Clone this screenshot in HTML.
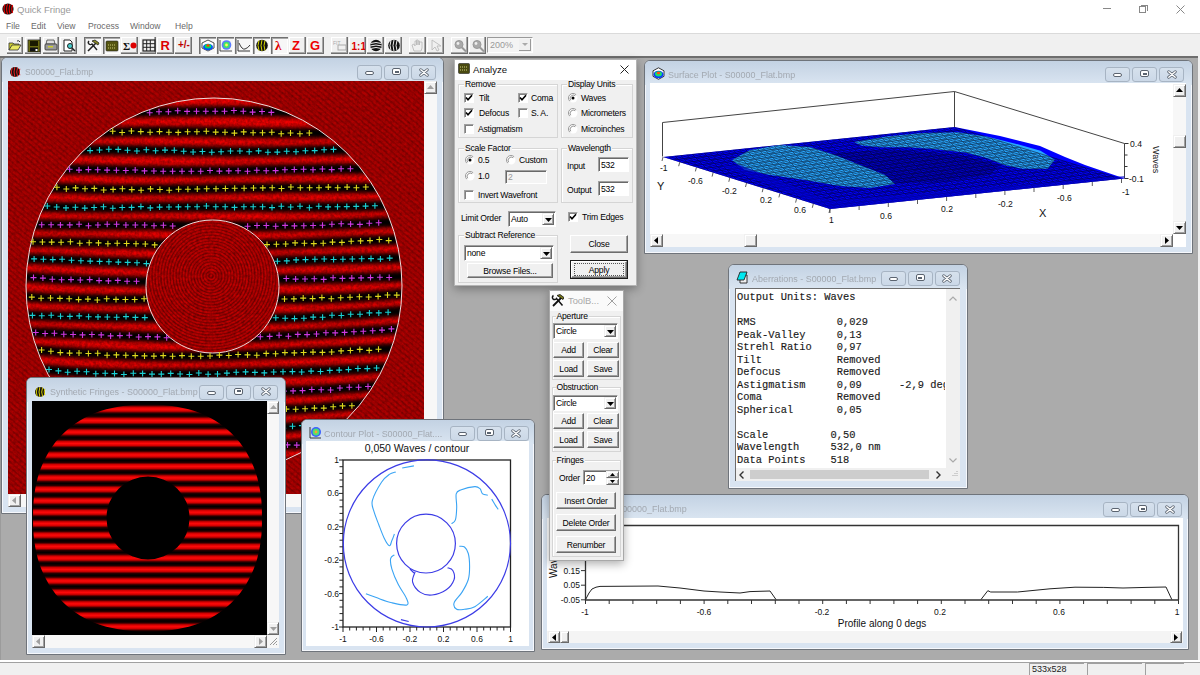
<!DOCTYPE html><html><head><meta charset="utf-8"><style>
*{box-sizing:border-box}
body{margin:0;width:1200px;height:675px;overflow:hidden;position:relative;background:#fff;font-family:'Liberation Sans',sans-serif;}
.a{position:absolute}
.t{position:absolute;white-space:nowrap;line-height:1}
.win{position:absolute;border:1px solid #6f747b;border-radius:6px 6px 0 0;background:#d9e4f1;overflow:hidden;box-shadow:inset 0 0 0 1px rgba(255,255,255,0.75)}
.tb{position:absolute;left:0;right:0;top:0;height:24px;background:linear-gradient(#c3d2e3,#dae5f1)}
.wt{position:absolute;top:9px;font-size:9.6px;color:#a3a9b1;white-space:nowrap;line-height:1;transform:scaleX(0.932);transform-origin:0 0}
.wb{position:absolute;top:7px;width:25px;height:15px;border:1px solid #a7b4c3;border-radius:3px;background:linear-gradient(#d6e1ed,#cbd8e7)}
.cl{position:absolute;background:#fff}
.btn{position:absolute;letter-spacing:-0.2px;background:#f0f0f0;border:1px solid;border-color:#fff #6d6d6d #6d6d6d #fff;box-shadow:inset -1px -1px #a0a0a0;font-size:9px;color:#000;text-align:center;line-height:1}
.tbtn{position:absolute;top:37px;height:17px;border:1px solid;border-color:#fff #888 #888 #fff;}
.tbtn.dn{border-color:#888 #fff #fff #888;background:#f7f7f7}
.grp{position:absolute;border:1px solid #d5d5d5;box-shadow:1px 1px #fff inset}
.gl{position:absolute;background:#f0f0f0;font-size:8.6px;letter-spacing:-0.22px;padding:0 1px;line-height:1;top:-5px;left:5px;color:#000}
.chk{position:absolute;width:10px;height:10px;border:1px solid;border-color:#a0a0a0 #fff #fff #a0a0a0;background:#fff;box-shadow:inset 1px 1px #808080}
.rad{position:absolute;width:10px;height:10px;border-radius:50%;background:#fff;border:1px solid #a0a0a0}
.lab{position:absolute;font-size:9px;color:#000;white-space:nowrap;line-height:1}
.edit{position:absolute;background:#fff;border:1px solid;border-color:#a0a0a0 #fff #fff #a0a0a0;box-shadow:inset 1px 1px #696969;font-size:9px;line-height:1}
.sb{position:absolute;background:#f5f5f5}
.sbb{position:absolute;background:#f0f0f0;border:1px solid;border-color:#f0f0f0 #696969 #696969 #f0f0f0;box-shadow:inset 1px 1px #fff, inset -1px -1px #a0a0a0}
</style></head><body>

<svg class="a" style="left:2px;top:3px" width="12" height="12" viewBox="0 0 12 12"><circle cx="6" cy="6" r="5.6" fill="#111"/><path d="M3 1.5 Q1 6 3 10.5 M5.6 1 Q3.6 6 5.6 11 M8.2 1 Q6.2 6 8.2 11 M10.6 2 Q8.8 6 10.6 10" stroke="#e00" stroke-width="1.1" fill="none"/></svg>
<div class="t" style="left:17px;top:5px;font-size:9.5px;color:#9a9a9a">Quick Fringe</div>
<div class="a" style="left:1103px;top:8px;width:8px;height:1px;background:#888"></div>
<div class="a" style="left:1139px;top:6px;width:7px;height:7px;border:1px solid #888"></div><div class="a" style="left:1141px;top:4.5px;width:6.5px;height:6.5px;border-top:1px solid #888;border-right:1px solid #888"></div>
<svg class="a" style="left:1176px;top:5px" width="9" height="9"><path d="M0.5 0.5L8.5 8.5M8.5 0.5L0.5 8.5" stroke="#888" stroke-width="1"/></svg>
<div class="t" style="left:6px;top:22px;font-size:8.6px;color:#6a6a6a">File</div>
<div class="t" style="left:31px;top:22px;font-size:8.6px;color:#6a6a6a">Edit</div>
<div class="t" style="left:57px;top:22px;font-size:8.6px;color:#6a6a6a">View</div>
<div class="t" style="left:88px;top:22px;font-size:8.6px;color:#6a6a6a">Process</div>
<div class="t" style="left:130px;top:22px;font-size:8.6px;color:#6a6a6a">Window</div>
<div class="t" style="left:175px;top:22px;font-size:8.6px;color:#6a6a6a">Help</div>
<div class="a" style="left:0;top:33px;width:1200px;height:1px;background:#dadada"></div>
<div class="a" style="left:0;top:34px;width:1200px;height:22px;background:#f0f0f0"></div>
<div class="a" style="left:0;top:56px;width:1200px;height:2px;background:#6e6e6e"></div>
<div class="a" style="left:7px;top:37px;width:16px;height:17px;border-right:1px solid #707070;border-bottom:1px solid #707070;box-shadow:inset -1px -1px #a8a8a8, inset 1px 1px #fff"></div>
<div class="a" style="left:25px;top:37px;width:16px;height:17px;border-right:1px solid #707070;border-bottom:1px solid #707070;box-shadow:inset -1px -1px #a8a8a8, inset 1px 1px #fff"></div>
<div class="a" style="left:43px;top:37px;width:16px;height:17px;border-right:1px solid #707070;border-bottom:1px solid #707070;box-shadow:inset -1px -1px #a8a8a8, inset 1px 1px #fff"></div>
<div class="a" style="left:60px;top:37px;width:17px;height:17px;border-right:1px solid #707070;border-bottom:1px solid #707070;box-shadow:inset -1px -1px #a8a8a8, inset 1px 1px #fff"></div>
<div class="a" style="left:84px;top:37px;width:17px;height:17px;border-left:1px solid #707070;border-top:1px solid #707070;box-shadow:inset 1px 1px #a8a8a8, inset -1px -1px #fff;background:#f7f7f7"></div>
<div class="a" style="left:103px;top:37px;width:17px;height:17px;border-left:1px solid #707070;border-top:1px solid #707070;box-shadow:inset 1px 1px #a8a8a8, inset -1px -1px #fff;background:#f7f7f7"></div>
<div class="a" style="left:121px;top:37px;width:17px;height:17px;border-right:1px solid #707070;border-bottom:1px solid #707070;box-shadow:inset -1px -1px #a8a8a8, inset 1px 1px #fff"></div>
<div class="a" style="left:140px;top:37px;width:16px;height:17px;border-right:1px solid #707070;border-bottom:1px solid #707070;box-shadow:inset -1px -1px #a8a8a8, inset 1px 1px #fff"></div>
<div class="a" style="left:157px;top:37px;width:17px;height:17px;border-right:1px solid #707070;border-bottom:1px solid #707070;box-shadow:inset -1px -1px #a8a8a8, inset 1px 1px #fff"></div>
<div class="a" style="left:175px;top:37px;width:17px;height:17px;border-right:1px solid #707070;border-bottom:1px solid #707070;box-shadow:inset -1px -1px #a8a8a8, inset 1px 1px #fff"></div>
<div class="a" style="left:199px;top:37px;width:17px;height:17px;border-left:1px solid #707070;border-top:1px solid #707070;box-shadow:inset 1px 1px #a8a8a8, inset -1px -1px #fff;background:#f7f7f7"></div>
<div class="a" style="left:217px;top:37px;width:17px;height:17px;border-left:1px solid #707070;border-top:1px solid #707070;box-shadow:inset 1px 1px #a8a8a8, inset -1px -1px #fff;background:#f7f7f7"></div>
<div class="a" style="left:235px;top:37px;width:17px;height:17px;border-left:1px solid #707070;border-top:1px solid #707070;box-shadow:inset 1px 1px #a8a8a8, inset -1px -1px #fff;background:#f7f7f7"></div>
<div class="a" style="left:253px;top:37px;width:17px;height:17px;border-left:1px solid #707070;border-top:1px solid #707070;box-shadow:inset 1px 1px #a8a8a8, inset -1px -1px #fff;background:#f7f7f7"></div>
<div class="a" style="left:271px;top:37px;width:17px;height:17px;border-left:1px solid #707070;border-top:1px solid #707070;box-shadow:inset 1px 1px #a8a8a8, inset -1px -1px #fff;background:#f7f7f7"></div>
<div class="a" style="left:289px;top:37px;width:17px;height:17px;border-right:1px solid #707070;border-bottom:1px solid #707070;box-shadow:inset -1px -1px #a8a8a8, inset 1px 1px #fff"></div>
<div class="a" style="left:307px;top:37px;width:17px;height:17px;border-right:1px solid #707070;border-bottom:1px solid #707070;box-shadow:inset -1px -1px #a8a8a8, inset 1px 1px #fff"></div>
<div class="a" style="left:331px;top:37px;width:17px;height:17px;border-right:1px solid #707070;border-bottom:1px solid #707070;box-shadow:inset -1px -1px #a8a8a8, inset 1px 1px #fff"></div>
<div class="a" style="left:349px;top:37px;width:17px;height:17px;border-right:1px solid #707070;border-bottom:1px solid #707070;box-shadow:inset -1px -1px #a8a8a8, inset 1px 1px #fff"></div>
<div class="a" style="left:367px;top:37px;width:17px;height:17px;border-right:1px solid #707070;border-bottom:1px solid #707070;box-shadow:inset -1px -1px #a8a8a8, inset 1px 1px #fff"></div>
<div class="a" style="left:385px;top:37px;width:17px;height:17px;border-right:1px solid #707070;border-bottom:1px solid #707070;box-shadow:inset -1px -1px #a8a8a8, inset 1px 1px #fff"></div>
<div class="a" style="left:409px;top:37px;width:17px;height:17px;border-right:1px solid #707070;border-bottom:1px solid #707070;box-shadow:inset -1px -1px #a8a8a8, inset 1px 1px #fff"></div>
<div class="a" style="left:427px;top:37px;width:17px;height:17px;border-right:1px solid #707070;border-bottom:1px solid #707070;box-shadow:inset -1px -1px #a8a8a8, inset 1px 1px #fff"></div>
<div class="a" style="left:451px;top:37px;width:17px;height:17px;border-right:1px solid #707070;border-bottom:1px solid #707070;box-shadow:inset -1px -1px #a8a8a8, inset 1px 1px #fff"></div>
<div class="a" style="left:469px;top:37px;width:17px;height:17px;border-right:1px solid #707070;border-bottom:1px solid #707070;box-shadow:inset -1px -1px #a8a8a8, inset 1px 1px #fff"></div>
<svg class="a" style="left:8px;top:39px" width="14" height="13" viewBox="0 0 14 13"><path d="M1 4h4l1 1h5v2H4L1 11z" fill="#cccc33" stroke="#333" stroke-width="0.8"/><path d="M1 11l3-5h9l-3 5z" fill="#e8e860" stroke="#333" stroke-width="0.8"/><path d="M9 2q2-1 3 1" stroke="#333" fill="none"/></svg>
<svg class="a" style="left:27px;top:39px" width="14" height="13" viewBox="0 0 14 13"><rect x="1" y="1" width="12" height="12" fill="#6b6b10" stroke="#222" stroke-width="0.8"/><rect x="3" y="2" width="8" height="5" fill="#1a1a00"/><rect x="3" y="8.5" width="8" height="4" fill="#111"/><rect x="8.5" y="10" width="2" height="2" fill="#fff"/></svg>
<svg class="a" style="left:44px;top:39px" width="14" height="13" viewBox="0 0 14 13"><path d="M3 1h7l1 4H2z" fill="#ddd" stroke="#444" stroke-width="0.8"/><rect x="1" y="5" width="12" height="6" rx="1" fill="#999" stroke="#333" stroke-width="0.8"/><rect x="4" y="7" width="5" height="1.5" fill="#cc3"/></svg>
<svg class="a" style="left:62px;top:39px" width="14" height="13" viewBox="0 0 14 13"><path d="M2 1h6l2 2v9H2z" fill="#fff" stroke="#222" stroke-width="1"/><circle cx="8" cy="7" r="2.5" fill="#4cc" stroke="#222" stroke-width="1"/><path d="M10 9l3 3" stroke="#222" stroke-width="1.5"/></svg>
<svg class="a" style="left:86px;top:39px" width="14" height="13" viewBox="0 0 14 13"><path d="M2 12L11 3" stroke="#222" stroke-width="1.6"/><path d="M6 2l6 4 1-2-4-3z" fill="#888822" stroke="#222" stroke-width="0.8"/><path d="M3 2a2 2 0 1 0 3 3L11 11" stroke="#222" stroke-width="1.4" fill="none"/></svg>
<svg class="a" style="left:105px;top:40px" width="14" height="13" viewBox="0 0 14 13"><rect x="1" y="1" width="12" height="10" rx="1" fill="#555511" stroke="#222" stroke-width="0.6"/><path d="M3 5h8M3 8h8" stroke="#cccc77" stroke-width="1" stroke-dasharray="1 1"/></svg>
<svg class="a" style="left:123px;top:39px" width="14" height="13" viewBox="0 0 14 13"><text x="0" y="11" font-size="11" font-family="Liberation Serif" font-weight="bold" fill="#111">Σ</text><circle cx="10.5" cy="6.5" r="3" fill="#d00"/></svg>
<svg class="a" style="left:142px;top:39px" width="14" height="13" viewBox="0 0 14 13"><rect x="1" y="1" width="12" height="11" fill="none" stroke="#222" stroke-width="1.2"/><path d="M4.7 1v11M8.3 1v11M1 4.7h12M1 8.3h12" stroke="#222" stroke-width="1"/></svg>
<svg class="a" style="left:159px;top:38px" width="14" height="13" viewBox="0 0 14 13"><text x="1.5" y="12" font-size="13" font-family="Liberation Sans" font-weight="bold" fill="#d00">R</text></svg>
<svg class="a" style="left:177px;top:38px" width="14" height="13" viewBox="0 0 14 13"><text x="1" y="10" font-size="10" font-family="Liberation Sans" font-weight="bold" fill="#b00">+/-</text></svg>
<svg class="a" style="left:201px;top:39px" width="14" height="13" viewBox="0 0 14 13"><path d="M7 1l6 3v5l-6 3-6-3V4z" fill="#fff" stroke="#222" stroke-width="0.8"/><ellipse cx="7" cy="8" rx="5" ry="3.3" fill="#0050ff"/><ellipse cx="7" cy="7.3" rx="3.3" ry="2.2" fill="#00e060"/><ellipse cx="7" cy="6.5" rx="1.6" ry="1.2" fill="#f40"/></svg>
<svg class="a" style="left:219px;top:39px" width="14" height="13" viewBox="0 0 14 13"><path d="M1 1v11h12" stroke="#222" fill="none" stroke-width="0.8"/><circle cx="7.5" cy="6" r="4.8" fill="#5a7cff"/><circle cx="7.5" cy="6" r="3.2" fill="#40e070"/><circle cx="7.5" cy="6" r="1.4" fill="#ff5"/></svg>
<svg class="a" style="left:237px;top:39px" width="14" height="13" viewBox="0 0 14 13"><path d="M1 1v11h12" stroke="#222" fill="none" stroke-width="0.9"/><path d="M2 4q3 7 6 6t5-4" stroke="#222" fill="none" stroke-width="0.9"/></svg>
<svg class="a" style="left:255px;top:39px" width="14" height="13" viewBox="0 0 14 13"><circle cx="7" cy="6.5" r="5.8" fill="#111"/><path d="M4 1.5Q2 6.5 4 11.5M7 1Q5 6.5 7 12M10 1.5Q8 6.5 10 11.5" stroke="#d8d800" stroke-width="1" fill="none"/></svg>
<svg class="a" style="left:273px;top:38px" width="14" height="13" viewBox="0 0 14 13"><text x="2" y="12" font-size="13" font-family="Liberation Serif" font-weight="bold" fill="#d00">λ</text></svg>
<svg class="a" style="left:291px;top:38px" width="14" height="13" viewBox="0 0 14 13"><text x="1" y="12" font-size="13" font-family="Liberation Sans" font-weight="bold" fill="#e00">Z</text></svg>
<svg class="a" style="left:309px;top:38px" width="14" height="13" viewBox="0 0 14 13"><text x="1" y="12" font-size="13" font-family="Liberation Sans" font-weight="bold" fill="#e00">G</text></svg>
<svg class="a" style="left:333px;top:39px" width="14" height="13" viewBox="0 0 14 13"><text x="0" y="6" font-size="5" fill="#aaa" font-family="Liberation Sans">FIT</text><rect x="5" y="6" width="8" height="5" fill="none" stroke="#aaa"/></svg>
<svg class="a" style="left:351px;top:38px" width="14" height="13" viewBox="0 0 14 13"><text x="0.5" y="11.5" font-size="10" font-family="Liberation Sans" font-weight="bold" fill="#d00">1:1</text></svg>
<svg class="a" style="left:369px;top:39px" width="14" height="13" viewBox="0 0 14 13"><circle cx="7" cy="6.5" r="5.8" fill="#111"/><path d="M1.5 4.5Q7 2.5 12.5 4.5M1 7Q7 5 13 7M1.5 9.5Q7 7.5 12.5 9.5" stroke="#eee" stroke-width="1" fill="none"/></svg>
<svg class="a" style="left:387px;top:39px" width="14" height="13" viewBox="0 0 14 13"><circle cx="7" cy="6.5" r="5.8" fill="#111"/><path d="M4 1.5Q2 6.5 4 11.5M7 1Q5 6.5 7 12M10 1.5Q8 6.5 10 11.5" stroke="#eee" stroke-width="1" fill="none"/></svg>
<svg class="a" style="left:411px;top:39px" width="14" height="13" viewBox="0 0 14 13"><path d="M3 12L1 6l2-1 1 2V2h1.5v4V1h1.5v5V2h1.5v4V3H11v6l-1 3z" fill="none" stroke="#bbb" stroke-width="0.9"/></svg>
<svg class="a" style="left:430px;top:39px" width="14" height="13" viewBox="0 0 14 13"><path d="M2 1v10l3-3 2 4 2-1-2-4h4z" fill="none" stroke="#bbb" stroke-width="0.9"/></svg>
<svg class="a" style="left:453px;top:39px" width="14" height="13" viewBox="0 0 14 13"><circle cx="6" cy="5.5" r="4" fill="#aaa" stroke="#999"/><path d="M9 8.5l4 4" stroke="#999" stroke-width="2"/><circle cx="5" cy="4.5" r="1.4" fill="#eee"/></svg>
<svg class="a" style="left:471px;top:39px" width="14" height="13" viewBox="0 0 14 13"><circle cx="6" cy="5.5" r="4" fill="#aaa" stroke="#999"/><path d="M9 8.5l4 4" stroke="#999" stroke-width="2"/><circle cx="5" cy="4.5" r="1.4" fill="#eee"/></svg>
<div class="a" style="left:487px;top:37px;width:46px;height:16px;border:1px solid;border-color:#999 #fff #fff #999;background:#f4f4f4"></div>
<div class="t" style="left:490px;top:41px;font-size:9px;color:#999">200%</div>
<div class="a" style="left:519px;top:39px;width:12px;height:12px;background:#f0f0f0;border-right:1px solid #999;border-bottom:1px solid #999"></div>
<svg class="a" style="left:522px;top:43px" width="6" height="4"><path d="M0 0h6L3 3z" fill="#aaa"/></svg>
<div class="a" style="left:0;top:58px;width:1199px;height:602px;background:#ababab;border-left:1px solid #9b9b9b"></div>
<div class="a" style="left:1198px;top:56px;width:2px;height:604px;background:#f0f0f0"></div>
<div class="a" style="left:0;top:660px;width:1200px;height:2px;background:#fff"></div>
<div class="a" style="left:0;top:662px;width:1200px;height:1px;background:#a0a0a0"></div>
<div class="a" style="left:0;top:663px;width:1200px;height:12px;background:#f0f0f0"></div>
<div class="a" style="left:1029px;top:663px;width:55px;height:12px;border-left:1px solid #a0a0a0;border-top:1px solid #a0a0a0"></div>
<div class="a" style="left:1087px;top:663px;width:55px;height:12px;border-left:1px solid #a0a0a0;border-top:1px solid #a0a0a0"></div>
<div class="a" style="left:1145px;top:663px;width:39px;height:12px;border-left:1px solid #a0a0a0;border-top:1px solid #a0a0a0"></div>
<div class="t" style="left:1032px;top:665px;font-size:9px;color:#222">533x528</div>
<div class="win" style="left:1px;top:57px;width:443px;height:457px"><div class="tb"></div>
<div class="a" style="left:6.8px;top:6px"><svg width="12" height="12" viewBox="0 0 12 12"><circle cx="6" cy="6" r="5.5" fill="#fff" opacity="0.5"/><circle cx="6" cy="6" r="5" fill="#111"/><path d="M3.2 1.8Q1.4 6 3.2 10.2M5.9 1Q4.1 6 5.9 11M8.6 1.5Q6.8 6 8.6 10.5M10.8 2.8Q9.6 6 10.8 9.2" stroke="#ee2222" stroke-width="1" fill="none"/></svg></div>
<div class="wt" style="left:22.7px;top:9px;color:#a3a9b1;transform:scaleX(0.9)">S00000_Flat.bmp</div>
<div class="wb" style="left:409px;top:7px"></div>
<svg class="a" style="left:416.5px;top:9.5px" width="10" height="9"><path d="M1.8 1.8L8.2 7.2M8.2 1.8L1.8 7.2" stroke="#5b6470" stroke-width="3" stroke-linecap="round"/><path d="M1.8 1.8L8.2 7.2M8.2 1.8L1.8 7.2" stroke="#fff" stroke-width="1.4" stroke-linecap="round"/></svg>
<div class="wb" style="left:382px;top:7px"></div>
<div class="a" style="left:390px;top:10px;width:9px;height:7px;border:1.5px solid #5b6470;border-radius:2px;background:#fff"></div><div class="a" style="left:392.5px;top:12.5px;width:4px;height:2px;background:#5b6470"></div>
<div class="wb" style="left:355px;top:7px"></div>
<div class="a" style="left:363px;top:13px;width:9px;height:4px;border:1.2px solid #5b6470;border-radius:2px;background:#fff"></div>
</div>
<svg class="a" style="left:8px;top:81px" width="416" height="413" viewBox="0 0 416 413"><defs><filter id="bl" x="-10%" y="-10%" width="120%" height="120%"><feGaussianBlur stdDeviation="2.0"/></filter><filter id="nz"><feTurbulence type="fractalNoise" baseFrequency="0.35" numOctaves="2" seed="3"/><feColorMatrix values="0 0 0 0 0  0 0 0 0 0  0 0 0 0 0  0 0 0 0.9 -0.25"/></filter><clipPath id="ring"><path clip-rule="evenodd" d="M18 205a188 188 0 1 0 376 0a188 188 0 1 0 -376 0z M138.0 205.5a66.5 66.5 0 1 0 133.0 0a66.5 66.5 0 1 0 -133.0 0z"/></clipPath><clipPath id="inner"><circle cx="204.5" cy="205.5" r="66.5"/></clipPath></defs><rect width="416" height="413" fill="#b00000"/><defs><pattern id="diag" width="4.2" height="4.2" patternUnits="userSpaceOnUse" patternTransform="rotate(40)"><rect width="4.2" height="1.6" fill="#500000" opacity="0.3"/></pattern></defs><rect width="416" height="413" fill="url(#diag)"/><rect width="416" height="413" filter="url(#nz)" opacity="0.45"/><g clip-path="url(#ring)"><rect width="416" height="413" fill="#f20000"/><g filter="url(#bl)"><path d="M0 33.0 L0 31.0 L10 31.2 L20 31.3 L30 31.5 L40 31.6 L50 31.7 L60 31.8 L70 31.8 L80 31.8 L90 31.7 L100 31.6 L110 31.5 L120 31.4 L130 31.2 L140 31.0 L150 30.8 L160 30.7 L170 30.5 L180 30.4 L190 30.3 L200 30.2 L210 30.2 L220 30.2 L230 30.3 L240 30.3 L250 30.5 L260 30.6 L270 30.8 L280 31.0 L290 31.1 L300 31.3 L310 31.5 L320 31.6 L330 31.7 L340 31.8 L350 31.8 L360 31.8 L370 31.7 L380 31.7 L390 31.6 L400 31.4 L410 31.2 L420 31.1 L430 30.9 " stroke="#060000" stroke-width="10.5" fill="none"/><path d="M0 53.4 L0 51.7 L10 51.8 L20 51.8 L30 51.8 L40 51.8 L50 51.7 L60 51.6 L70 51.4 L80 51.3 L90 51.2 L100 51.0 L110 50.9 L120 50.8 L130 50.7 L140 50.6 L150 50.6 L160 50.6 L170 50.7 L180 50.7 L190 50.8 L200 51.0 L210 51.1 L220 51.3 L230 51.5 L240 51.6 L250 51.8 L260 51.9 L270 52.0 L280 52.0 L290 52.0 L300 52.0 L310 51.9 L320 51.8 L330 51.7 L340 51.5 L350 51.3 L360 51.1 L370 50.8 L380 50.6 L390 50.4 L400 50.2 L410 50.0 L420 49.9 L430 49.8 " stroke="#060000" stroke-width="10.5" fill="none"/><path d="M0 72.0 L0 69.5 L10 69.4 L20 69.3 L30 69.2 L40 69.1 L50 69.1 L60 69.0 L70 69.0 L80 68.9 L90 69.0 L100 69.0 L110 69.1 L120 69.2 L130 69.3 L140 69.5 L150 69.7 L160 69.9 L170 70.1 L180 70.3 L190 70.4 L200 70.5 L210 70.6 L220 70.7 L230 70.7 L240 70.7 L250 70.6 L260 70.5 L270 70.4 L280 70.2 L290 70.0 L300 69.7 L310 69.5 L320 69.3 L330 69.0 L340 68.8 L350 68.6 L360 68.4 L370 68.2 L380 68.1 L390 68.0 L400 68.0 L410 68.0 L420 68.0 L430 68.0 " stroke="#060000" stroke-width="10.5" fill="none"/><path d="M0 91.5 L0 87.5 L10 87.6 L20 87.6 L30 87.7 L40 87.8 L50 88.0 L60 88.2 L70 88.4 L80 88.6 L90 88.8 L100 89.1 L110 89.3 L120 89.6 L130 89.8 L140 90.0 L150 90.1 L160 90.2 L170 90.3 L180 90.3 L190 90.3 L200 90.2 L210 90.1 L220 89.9 L230 89.7 L240 89.5 L250 89.3 L260 89.1 L270 88.8 L280 88.6 L290 88.4 L300 88.2 L310 88.0 L320 87.9 L330 87.8 L340 87.8 L350 87.7 L360 87.7 L370 87.7 L380 87.7 L390 87.7 L400 87.7 L410 87.7 L420 87.6 L430 87.6 " stroke="#060000" stroke-width="10.5" fill="none"/><path d="M0 110.0 L0 105.4 L10 105.7 L20 106.0 L30 106.3 L40 106.7 L50 107.0 L60 107.3 L70 107.6 L80 107.9 L90 108.1 L100 108.3 L110 108.5 L120 108.6 L130 108.6 L140 108.6 L150 108.6 L160 108.5 L170 108.3 L180 108.2 L190 108.0 L200 107.8 L210 107.6 L220 107.4 L230 107.3 L240 107.1 L250 107.0 L260 106.9 L270 106.8 L280 106.8 L290 106.7 L300 106.7 L310 106.7 L320 106.8 L330 106.8 L340 106.8 L350 106.8 L360 106.7 L370 106.7 L380 106.5 L390 106.4 L400 106.2 L410 105.9 L420 105.6 L430 105.2 " stroke="#060000" stroke-width="10.5" fill="none"/><path d="M0 128.5 L0 124.3 L10 124.7 L20 125.1 L30 125.5 L40 125.8 L50 126.0 L60 126.2 L70 126.4 L80 126.5 L90 126.5 L100 126.5 L110 126.5 L120 126.4 L130 126.3 L140 126.2 L150 126.1 L160 126.0 L170 125.9 L180 125.8 L190 125.7 L200 125.7 L210 125.7 L220 125.7 L230 125.7 L240 125.7 L250 125.8 L260 125.9 L270 125.9 L280 126.0 L290 126.0 L300 126.0 L310 126.0 L320 125.9 L330 125.8 L340 125.6 L350 125.4 L360 125.1 L370 124.7 L380 124.3 L390 123.9 L400 123.5 L410 123.0 L420 122.5 L430 122.0 " stroke="#060000" stroke-width="10.5" fill="none"/><path d="M0 147.0 L0 142.9 L10 143.2 L20 143.5 L30 143.7 L40 143.8 L50 143.9 L60 143.9 L70 144.0 L80 144.0 L90 144.0 L100 144.0 L110 144.0 L120 144.0 L130 144.0 L140 144.0 L150 144.1 L160 144.2 L170 144.3 L180 144.4 L190 144.6 L200 144.7 L210 144.9 L220 145.0 L230 145.1 L240 145.2 L250 145.2 L260 145.2 L270 145.1 L280 145.0 L290 144.8 L300 144.6 L310 144.3 L320 144.0 L330 143.6 L340 143.2 L350 142.8 L360 142.3 L370 141.8 L380 141.3 L390 140.9 L400 140.4 L410 139.9 L420 139.5 L430 139.1 " stroke="#060000" stroke-width="10.5" fill="none"/><path d="M0 165.5 L0 160.4 L10 160.6 L20 160.8 L30 160.9 L40 161.0 L50 161.2 L60 161.3 L70 161.5 L80 161.6 L90 161.8 L100 162.1 L110 162.3 L120 162.5 L130 162.8 L140 163.0 L150 163.3 L160 163.5 L170 163.7 L180 163.9 L190 164.1 L200 164.1 L210 164.2 L220 164.2 L230 164.1 L240 164.0 L250 163.8 L260 163.5 L270 163.2 L280 162.9 L290 162.5 L300 162.1 L310 161.7 L320 161.3 L330 160.9 L340 160.5 L350 160.0 L360 159.7 L370 159.3 L380 158.9 L390 158.6 L400 158.3 L410 158.0 L420 157.7 L430 157.4 " stroke="#060000" stroke-width="10.5" fill="none"/><path d="M0 183.5 L0 177.0 L10 177.4 L20 177.7 L30 178.0 L40 178.4 L50 178.8 L60 179.2 L70 179.6 L80 180.0 L90 180.4 L100 180.8 L110 181.1 L120 181.4 L130 181.7 L140 181.9 L150 182.1 L160 182.2 L170 182.3 L180 182.3 L190 182.2 L200 182.1 L210 181.9 L220 181.7 L230 181.4 L240 181.1 L250 180.8 L260 180.5 L270 180.2 L280 179.8 L290 179.5 L300 179.2 L310 178.9 L320 178.6 L330 178.4 L340 178.1 L350 177.9 L360 177.7 L370 177.4 L380 177.2 L390 176.9 L400 176.6 L410 176.2 L420 175.8 L430 175.4 " stroke="#060000" stroke-width="10.5" fill="none"/><path d="M0 202.0 L0 195.1 L10 195.7 L20 196.3 L30 196.8 L40 197.4 L50 197.9 L60 198.4 L70 198.9 L80 199.3 L90 199.6 L100 199.9 L110 200.1 L120 200.3 L130 200.4 L140 200.4 L150 200.4 L160 200.3 L170 200.2 L180 200.0 L190 199.8 L200 199.6 L210 199.4 L220 199.2 L230 199.0 L240 198.8 L250 198.7 L260 198.5 L270 198.3 L280 198.2 L290 198.1 L300 197.9 L310 197.8 L320 197.6 L330 197.4 L340 197.2 L350 197.0 L360 196.7 L370 196.3 L380 195.9 L390 195.4 L400 194.9 L410 194.3 L420 193.6 L430 192.9 " stroke="#060000" stroke-width="10.5" fill="none"/><path d="M0 221.0 L0 214.6 L10 215.2 L20 215.8 L30 216.4 L40 216.9 L50 217.3 L60 217.6 L70 217.9 L80 218.1 L90 218.3 L100 218.4 L110 218.4 L120 218.5 L130 218.5 L140 218.4 L150 218.4 L160 218.3 L170 218.3 L180 218.2 L190 218.2 L200 218.2 L210 218.2 L220 218.2 L230 218.2 L240 218.2 L250 218.2 L260 218.1 L270 218.1 L280 218.0 L290 217.9 L300 217.7 L310 217.5 L320 217.2 L330 216.8 L340 216.4 L350 215.9 L360 215.3 L370 214.7 L380 214.0 L390 213.3 L400 212.5 L410 211.7 L420 210.9 L430 210.0 " stroke="#060000" stroke-width="10.5" fill="none"/><path d="M0 239.7 L0 233.3 L10 233.8 L20 234.2 L30 234.6 L40 234.9 L50 235.2 L60 235.4 L70 235.6 L80 235.7 L90 235.9 L100 236.0 L110 236.2 L120 236.3 L130 236.5 L140 236.6 L150 236.8 L160 237.0 L170 237.1 L180 237.3 L190 237.4 L200 237.6 L210 237.7 L220 237.8 L230 237.8 L240 237.8 L250 237.7 L260 237.6 L270 237.4 L280 237.1 L290 236.7 L300 236.3 L310 235.8 L320 235.3 L330 234.7 L340 234.0 L350 233.4 L360 232.7 L370 231.9 L380 231.2 L390 230.5 L400 229.7 L410 229.0 L420 228.3 L430 227.6 " stroke="#060000" stroke-width="10.5" fill="none"/><path d="M0 258.0 L0 250.4 L10 250.8 L20 251.2 L30 251.6 L40 251.9 L50 252.3 L60 252.7 L70 253.0 L80 253.4 L90 253.8 L100 254.1 L110 254.5 L120 254.9 L130 255.2 L140 255.6 L150 255.9 L160 256.2 L170 256.4 L180 256.6 L190 256.7 L200 256.7 L210 256.7 L220 256.6 L230 256.4 L240 256.2 L250 255.9 L260 255.5 L270 255.1 L280 254.6 L290 254.1 L300 253.5 L310 252.9 L320 252.4 L330 251.8 L340 251.2 L350 250.6 L360 250.0 L370 249.4 L380 248.8 L390 248.2 L400 247.6 L410 247.0 L420 246.4 L430 245.8 " stroke="#060000" stroke-width="10.5" fill="none"/><path d="M0 276.6 L0 267.7 L10 268.3 L20 268.9 L30 269.5 L40 270.1 L50 270.7 L60 271.3 L70 271.9 L80 272.5 L90 273.0 L100 273.5 L110 274.0 L120 274.4 L130 274.7 L140 275.0 L150 275.2 L160 275.3 L170 275.3 L180 275.3 L190 275.2 L200 275.0 L210 274.8 L220 274.5 L230 274.2 L240 273.8 L250 273.5 L260 273.0 L270 272.6 L280 272.2 L290 271.8 L300 271.3 L310 270.9 L320 270.5 L330 270.1 L340 269.6 L350 269.2 L360 268.7 L370 268.3 L380 267.7 L390 267.2 L400 266.5 L410 265.9 L420 265.1 L430 264.3 " stroke="#060000" stroke-width="10.5" fill="none"/><path d="M0 295.0 L0 285.9 L10 286.7 L20 287.5 L30 288.4 L40 289.1 L50 289.8 L60 290.5 L70 291.1 L80 291.6 L90 292.1 L100 292.4 L110 292.7 L120 292.9 L130 293.1 L140 293.1 L150 293.1 L160 293.1 L170 293.0 L180 292.8 L190 292.7 L200 292.5 L210 292.3 L220 292.0 L230 291.8 L240 291.6 L250 291.4 L260 291.1 L270 290.9 L280 290.7 L290 290.4 L300 290.1 L310 289.8 L320 289.5 L330 289.1 L340 288.7 L350 288.2 L360 287.6 L370 287.0 L380 286.2 L390 285.4 L400 284.5 L410 283.6 L420 282.6 L430 281.5 " stroke="#060000" stroke-width="10.5" fill="none"/><path d="M0 313.5 L0 304.8 L10 305.7 L20 306.5 L30 307.3 L40 307.9 L50 308.5 L60 309.0 L70 309.4 L80 309.8 L90 310.0 L100 310.2 L110 310.4 L120 310.5 L130 310.6 L140 310.6 L150 310.7 L160 310.7 L170 310.7 L180 310.7 L190 310.7 L200 310.7 L210 310.7 L220 310.7 L230 310.7 L240 310.6 L250 310.5 L260 310.4 L270 310.2 L280 310.0 L290 309.7 L300 309.4 L310 308.9 L320 308.4 L330 307.8 L340 307.1 L350 306.4 L360 305.5 L370 304.6 L380 303.6 L390 302.6 L400 301.6 L410 300.4 L420 299.3 L430 298.2 " stroke="#060000" stroke-width="10.5" fill="none"/><path d="M0 332.0 L0 323.1 L10 323.9 L20 324.5 L30 325.1 L40 325.6 L50 326.0 L60 326.4 L70 326.8 L80 327.1 L90 327.4 L100 327.7 L110 328.0 L120 328.3 L130 328.6 L140 328.8 L150 329.1 L160 329.3 L170 329.5 L180 329.7 L190 329.9 L200 330.0 L210 330.1 L220 330.1 L230 330.1 L240 330.0 L250 329.8 L260 329.5 L270 329.1 L280 328.7 L290 328.2 L300 327.6 L310 326.9 L320 326.1 L330 325.3 L340 324.5 L350 323.6 L360 322.6 L370 321.7 L380 320.7 L390 319.7 L400 318.7 L410 317.7 L420 316.7 L430 315.7 " stroke="#060000" stroke-width="10.5" fill="none"/><path d="M0 350.5 L0 340.3 L10 341.0 L20 341.7 L30 342.3 L40 342.9 L50 343.5 L60 344.0 L70 344.6 L80 345.2 L90 345.7 L100 346.2 L110 346.8 L120 347.3 L130 347.7 L140 348.1 L150 348.5 L160 348.8 L170 349.0 L180 349.2 L190 349.2 L200 349.2 L210 349.2 L220 349.0 L230 348.7 L240 348.4 L250 347.9 L260 347.4 L270 346.9 L280 346.3 L290 345.6 L300 344.9 L310 344.2 L320 343.4 L330 342.7 L340 341.9 L350 341.1 L360 340.3 L370 339.5 L380 338.7 L390 337.9 L400 337.0 L410 336.1 L420 335.2 L430 334.2 " stroke="#060000" stroke-width="10.5" fill="none"/><path d="M0 369.0 L0 357.6 L10 358.5 L20 359.4 L30 360.3 L40 361.2 L50 362.0 L60 362.8 L70 363.6 L80 364.3 L90 365.0 L100 365.6 L110 366.2 L120 366.6 L130 367.0 L140 367.3 L150 367.5 L160 367.6 L170 367.7 L180 367.6 L190 367.5 L200 367.3 L210 367.0 L220 366.7 L230 366.3 L240 365.9 L250 365.4 L260 364.9 L270 364.4 L280 363.9 L290 363.4 L300 362.8 L310 362.3 L320 361.7 L330 361.1 L340 360.5 L350 359.8 L360 359.1 L370 358.4 L380 357.6 L390 356.7 L400 355.8 L410 354.8 L420 353.7 L430 352.5 " stroke="#060000" stroke-width="10.5" fill="none"/><path d="M0 387.5 L0 376.1 L10 377.3 L20 378.3 L30 379.4 L40 380.3 L50 381.2 L60 382.0 L70 382.8 L80 383.4 L90 384.0 L100 384.4 L110 384.8 L120 385.1 L130 385.2 L140 385.4 L150 385.4 L160 385.4 L170 385.3 L180 385.2 L190 385.0 L200 384.8 L210 384.6 L220 384.4 L230 384.1 L240 383.9 L250 383.6 L260 383.3 L270 383.0 L280 382.7 L290 382.3 L300 381.9 L310 381.4 L320 380.9 L330 380.3 L340 379.6 L350 378.8 L360 378.0 L370 377.0 L380 376.0 L390 374.9 L400 373.7 L410 372.4 L420 371.0 L430 369.5 " stroke="#060000" stroke-width="10.5" fill="none"/><path d="M0 406.0 L0 395.1 L10 396.2 L20 397.2 L30 398.1 L40 399.0 L50 399.7 L60 400.3 L70 400.9 L80 401.4 L90 401.7 L100 402.1 L110 402.3 L120 402.6 L130 402.7 L140 402.9 L150 403.0 L160 403.1 L170 403.2 L180 403.2 L190 403.3 L200 403.3 L210 403.3 L220 403.2 L230 403.2 L240 403.1 L250 402.9 L260 402.7 L270 402.4 L280 402.0 L290 401.5 L300 401.0 L310 400.3 L320 399.6 L330 398.8 L340 397.8 L350 396.8 L360 395.7 L370 394.5 L380 393.3 L390 392.0 L400 390.6 L410 389.2 L420 387.8 L430 386.3 " stroke="#060000" stroke-width="10.5" fill="none"/></g><rect width="416" height="413" filter="url(#nz)" opacity="0.65"/></g><g clip-path="url(#inner)"><rect width="416" height="413" fill="#c20000"/><circle cx="203" cy="195" r="2" fill="none" stroke="#500000" stroke-width="1.2" opacity="0.5"/><circle cx="203" cy="195" r="5" fill="none" stroke="#500000" stroke-width="1.2" opacity="0.5"/><circle cx="203" cy="195" r="8" fill="none" stroke="#500000" stroke-width="1.2" opacity="0.5"/><circle cx="203" cy="195" r="11" fill="none" stroke="#500000" stroke-width="1.2" opacity="0.5"/><circle cx="203" cy="195" r="14" fill="none" stroke="#500000" stroke-width="1.2" opacity="0.5"/><circle cx="203" cy="195" r="17" fill="none" stroke="#500000" stroke-width="1.2" opacity="0.5"/><circle cx="203" cy="195" r="20" fill="none" stroke="#500000" stroke-width="1.2" opacity="0.5"/><circle cx="203" cy="195" r="23" fill="none" stroke="#500000" stroke-width="1.2" opacity="0.5"/><circle cx="203" cy="195" r="26" fill="none" stroke="#500000" stroke-width="1.2" opacity="0.5"/><circle cx="203" cy="195" r="29" fill="none" stroke="#500000" stroke-width="1.2" opacity="0.5"/><circle cx="203" cy="195" r="32" fill="none" stroke="#500000" stroke-width="1.2" opacity="0.5"/><circle cx="203" cy="195" r="35" fill="none" stroke="#500000" stroke-width="1.2" opacity="0.5"/><circle cx="203" cy="195" r="38" fill="none" stroke="#500000" stroke-width="1.2" opacity="0.5"/><circle cx="203" cy="195" r="41" fill="none" stroke="#500000" stroke-width="1.2" opacity="0.5"/><circle cx="203" cy="195" r="44" fill="none" stroke="#500000" stroke-width="1.2" opacity="0.5"/><circle cx="203" cy="195" r="47" fill="none" stroke="#500000" stroke-width="1.2" opacity="0.5"/><circle cx="203" cy="195" r="50" fill="none" stroke="#500000" stroke-width="1.2" opacity="0.5"/><circle cx="203" cy="195" r="53" fill="none" stroke="#500000" stroke-width="1.2" opacity="0.5"/><circle cx="203" cy="195" r="56" fill="none" stroke="#500000" stroke-width="1.2" opacity="0.5"/><circle cx="203" cy="195" r="59" fill="none" stroke="#500000" stroke-width="1.2" opacity="0.5"/><circle cx="203" cy="195" r="62" fill="none" stroke="#500000" stroke-width="1.2" opacity="0.5"/><circle cx="203" cy="195" r="65" fill="none" stroke="#500000" stroke-width="1.2" opacity="0.5"/><circle cx="203" cy="195" r="68" fill="none" stroke="#500000" stroke-width="1.2" opacity="0.5"/><circle cx="203" cy="195" r="71" fill="none" stroke="#500000" stroke-width="1.2" opacity="0.5"/><circle cx="203" cy="195" r="74" fill="none" stroke="#500000" stroke-width="1.2" opacity="0.5"/><circle cx="203" cy="195" r="77" fill="none" stroke="#500000" stroke-width="1.2" opacity="0.5"/><circle cx="203" cy="195" r="80" fill="none" stroke="#500000" stroke-width="1.2" opacity="0.5"/><circle cx="203" cy="195" r="83" fill="none" stroke="#500000" stroke-width="1.2" opacity="0.5"/><circle cx="203" cy="195" r="86" fill="none" stroke="#500000" stroke-width="1.2" opacity="0.5"/><circle cx="203" cy="195" r="89" fill="none" stroke="#500000" stroke-width="1.2" opacity="0.5"/><rect width="416" height="413" filter="url(#nz)" opacity="0.6"/></g><circle cx="206" cy="205" r="188" fill="none" stroke="#ecdcdc" stroke-width="1"/><circle cx="204.5" cy="205.5" r="66.5" fill="none" stroke="#ecdcdc" stroke-width="1"/><path d="M138.7 31.7h6M141.7 28.7v6M148.0 30.8h6M151.0 27.8v6M157.4 30.7h6M160.4 27.7v6M166.7 29.8h6M169.7 26.8v6M176.1 30.4h6M179.1 27.4v6M185.5 30.3h6M188.5 27.3v6M194.8 30.2h6M197.8 27.2v6M204.2 30.2h6M207.2 27.2v6M213.5 30.2h6M216.5 27.2v6M222.9 29.5h6M225.9 26.5v6M232.3 30.3h6M235.3 27.3v6M241.6 31.1h6M244.6 28.1v6M251.0 30.5h6M254.0 27.5v6M260.3 31.4h6M263.3 28.4v6M58.6 88.2h6M61.6 85.2v6M68.0 89.1h6M71.0 86.1v6M77.4 88.6h6M80.4 85.6v6M86.7 88.8h6M89.7 85.8v6M96.1 89.1h6M99.1 86.1v6M105.4 89.3h6M108.4 86.3v6M114.8 89.5h6M117.8 86.5v6M124.2 89.0h6M127.2 86.0v6M133.5 89.9h6M136.5 86.9v6M142.9 90.0h6M145.9 87.0v6M152.2 90.2h6M155.2 87.2v6M161.6 90.3h6M164.6 87.3v6M171.0 90.3h6M174.0 87.3v6M180.3 90.3h6M183.3 87.3v6M189.7 90.3h6M192.7 87.3v6M199.0 89.5h6M202.0 86.5v6M208.4 90.1h6M211.4 87.1v6M217.8 89.9h6M220.8 86.9v6M227.1 89.7h6M230.1 86.7v6M236.5 90.2h6M239.5 87.2v6M245.8 89.3h6M248.8 86.3v6M255.2 89.8h6M258.2 86.8v6M264.6 89.6h6M267.6 86.6v6M273.9 88.7h6M276.9 85.7v6M283.3 88.5h6M286.3 85.5v6M292.6 88.3h6M295.6 85.3v6M302.0 88.8h6M305.0 85.8v6M311.4 88.0h6M314.4 85.0v6M320.7 88.6h6M323.7 85.6v6M330.1 87.8h6M333.1 84.8v6M339.4 87.7h6M342.4 84.7v6M30.7 143.7h6M33.7 140.7v6M40.1 143.8h6M43.1 140.8v6M49.4 143.9h6M52.4 140.9v6M58.8 143.9h6M61.8 140.9v6M68.1 143.3h6M71.1 140.3v6M77.5 144.7h6M80.5 141.7v6M86.9 144.0h6M89.9 141.0v6M96.2 143.3h6M99.2 140.3v6M105.6 143.3h6M108.6 140.3v6M114.9 144.0h6M117.9 141.0v6M124.3 144.0h6M127.3 141.0v6M133.7 144.0h6M136.7 141.0v6M143.0 144.8h6M146.0 141.8v6M152.4 144.2h6M155.4 141.2v6M161.7 145.0h6M164.7 142.0v6M236.6 145.2h6M239.6 142.2v6M246.0 144.5h6M249.0 141.5v6M255.3 144.5h6M258.3 141.5v6M264.7 145.2h6M267.7 142.2v6M274.1 144.4h6M277.1 141.4v6M283.4 144.9h6M286.4 141.9v6M292.8 144.7h6M295.8 141.7v6M302.1 144.5h6M305.1 141.5v6M311.5 144.2h6M314.5 141.2v6M320.9 143.2h6M323.9 140.2v6M330.2 142.8h6M333.2 139.8v6M339.6 143.1h6M342.6 140.1v6M348.9 143.4h6M351.9 140.4v6M358.3 142.2h6M361.3 139.2v6M367.7 141.8h6M370.7 138.8v6M22.5 196.6h6M25.5 193.6v6M31.9 197.1h6M34.9 194.1v6M41.3 198.3h6M44.3 195.3v6M50.6 198.8h6M53.6 195.8v6M60.0 198.6h6M63.0 195.6v6M69.3 199.0h6M72.3 196.0v6M78.7 198.6h6M81.7 195.6v6M88.1 199.6h6M91.1 196.6v6M97.4 199.9h6M100.4 196.9v6M106.8 199.4h6M109.8 196.4v6M116.1 200.3h6M119.1 197.3v6M125.5 200.3h6M128.5 197.3v6M275.3 197.5h6M278.3 194.5v6M284.6 198.1h6M287.6 195.1v6M294.0 198.0h6M297.0 195.0v6M303.3 197.8h6M306.3 194.8v6M312.7 198.4h6M315.7 195.4v6M322.1 196.8h6M325.1 193.8v6M331.4 197.4h6M334.4 194.4v6M340.8 197.1h6M343.8 194.1v6M350.1 196.9h6M353.1 193.9v6M359.5 196.6h6M362.5 193.6v6M368.9 196.2h6M371.9 193.2v6M378.2 196.5h6M381.2 193.5v6M24.7 251.5h6M27.7 248.5v6M34.1 252.5h6M37.1 249.5v6M43.4 252.2h6M46.4 249.2v6M52.8 253.2h6M55.8 250.2v6M62.1 253.5h6M65.1 250.5v6M71.5 253.9h6M74.5 250.9v6M80.9 253.5h6M83.9 250.5v6M90.2 253.9h6M93.2 250.9v6M99.6 254.9h6M102.6 251.9v6M108.9 254.6h6M111.9 251.6v6M118.3 254.2h6M121.3 251.2v6M127.7 256.0h6M130.7 253.0v6M137.0 255.6h6M140.0 252.6v6M146.4 255.9h6M149.4 252.9v6M155.7 256.8h6M158.7 253.8v6M249.3 255.8h6M252.3 252.8v6M258.7 255.4h6M261.7 252.4v6M268.1 254.3h6M271.1 251.3v6M277.4 255.3h6M280.4 252.3v6M286.8 253.4h6M289.8 250.4v6M296.1 253.6h6M299.1 250.6v6M305.5 253.0h6M308.5 250.0v6M314.9 251.8h6M317.9 248.8v6M324.2 251.9h6M327.2 248.9v6M333.6 251.4h6M336.6 248.4v6M342.9 250.8h6M345.9 247.8v6M352.3 250.2h6M355.3 247.2v6M361.7 249.7h6M364.7 246.7v6M371.0 249.1h6M374.0 246.1v6M380.4 247.9h6M383.4 244.9v6M48.1 308.6h6M51.1 305.6v6M57.5 309.0h6M60.5 306.0v6M66.8 308.7h6M69.8 305.7v6M76.2 309.7h6M79.2 306.7v6M85.6 309.3h6M88.6 306.3v6M94.9 310.9h6M97.9 307.9v6M104.3 310.4h6M107.3 307.4v6M113.6 310.5h6M116.6 307.5v6M123.0 310.6h6M126.0 307.6v6M132.4 311.3h6M135.4 308.3v6M141.7 310.7h6M144.7 307.7v6M151.1 310.7h6M154.1 307.7v6M160.4 310.0h6M163.4 307.0v6M169.8 310.7h6M172.8 307.7v6M179.2 310.7h6M182.2 307.7v6M188.5 311.4h6M191.5 308.4v6M197.9 310.7h6M200.9 307.7v6M207.2 310.0h6M210.2 307.0v6M216.6 310.7h6M219.6 307.7v6M226.0 310.7h6M229.0 307.7v6M235.3 309.9h6M238.3 306.9v6M244.7 310.6h6M247.7 307.6v6M254.0 310.4h6M257.0 307.4v6M263.4 310.3h6M266.4 307.3v6M272.8 310.1h6M275.8 307.1v6M282.1 309.9h6M285.1 306.9v6M291.5 309.6h6M294.5 306.6v6M300.8 308.5h6M303.8 305.5v6M310.2 308.8h6M313.2 305.8v6M319.6 309.0h6M322.6 306.0v6M328.9 307.0h6M331.9 304.0v6M338.3 306.3h6M341.3 303.3v6M347.6 306.3h6M350.6 303.3v6M357.0 305.5h6M360.0 302.5v6M108.0 366.2h6M111.0 363.2v6M117.3 365.9h6M120.3 362.9v6M126.7 367.0h6M129.7 364.0v6M136.1 366.6h6M139.1 363.6v6M145.4 368.2h6M148.4 365.2v6M154.8 367.6h6M157.8 364.6v6M164.1 367.7h6M167.1 364.7v6M173.5 367.7h6M176.5 364.7v6M182.9 368.3h6M185.9 365.3v6M192.2 367.4h6M195.2 364.4v6M201.6 367.2h6M204.6 364.2v6M210.9 366.9h6M213.9 363.9v6M220.3 365.9h6M223.3 362.9v6M229.7 366.2h6M232.7 363.2v6M239.0 365.1h6M242.0 362.1v6M248.4 365.3h6M251.4 362.3v6M257.7 364.9h6M260.7 361.9v6M267.1 364.4h6M270.1 361.4v6M276.5 363.9h6M279.5 360.9v6M285.8 364.1h6M288.8 361.1v6M295.2 362.9h6M298.2 359.9v6" stroke="#d038e0" stroke-width="1.1" fill="none"/><path d="M101.7 50.2h6M104.7 47.2v6M111.1 51.5h6M114.1 48.5v6M120.4 50.0h6M123.4 47.0v6M129.8 50.6h6M132.8 47.6v6M139.1 51.3h6M142.1 48.3v6M148.5 50.6h6M151.5 47.6v6M157.9 51.3h6M160.9 48.3v6M167.2 51.4h6M170.2 48.4v6M176.6 50.7h6M179.6 47.7v6M185.9 50.8h6M188.9 47.8v6M195.3 50.3h6M198.3 47.3v6M204.7 51.1h6M207.7 48.1v6M214.0 51.3h6M217.0 48.3v6M223.4 52.1h6M226.4 49.1v6M232.7 50.9h6M235.7 47.9v6M242.1 51.7h6M245.1 48.7v6M251.5 51.8h6M254.5 48.8v6M260.8 51.2h6M263.8 48.2v6M270.2 52.7h6M273.2 49.7v6M279.5 52.0h6M282.5 49.0v6M288.9 52.7h6M291.9 49.7v6M298.3 52.0h6M301.3 49.0v6M45.9 106.3h6M48.9 103.3v6M55.3 108.0h6M58.3 105.0v6M64.6 106.9h6M67.6 103.9v6M74.0 107.8h6M77.0 104.8v6M83.3 107.4h6M86.3 104.4v6M92.7 109.0h6M95.7 106.0v6M102.1 108.4h6M105.1 105.4v6M111.4 107.8h6M114.4 104.8v6M120.8 108.6h6M123.8 105.6v6M130.1 109.3h6M133.1 106.3v6M139.5 107.9h6M142.5 104.9v6M148.9 108.5h6M151.9 105.5v6M158.2 109.2h6M161.2 106.2v6M167.6 108.3h6M170.6 105.3v6M176.9 108.2h6M179.9 105.2v6M186.3 108.0h6M189.3 105.0v6M195.7 107.8h6M198.7 104.8v6M205.0 107.7h6M208.0 104.7v6M214.4 107.5h6M217.4 104.5v6M223.7 107.3h6M226.7 104.3v6M233.1 107.2h6M236.1 104.2v6M242.5 107.0h6M245.5 104.0v6M251.8 106.9h6M254.8 103.9v6M261.2 106.8h6M264.2 103.8v6M270.5 107.5h6M273.5 104.5v6M279.9 106.0h6M282.9 103.0v6M289.3 106.7h6M292.3 103.7v6M298.6 106.7h6M301.6 103.7v6M308.0 106.7h6M311.0 103.7v6M317.3 106.1h6M320.3 103.1v6M326.7 106.8h6M329.7 103.8v6M336.1 106.1h6M339.1 103.1v6M345.4 106.8h6M348.4 103.8v6M354.8 106.0h6M357.8 103.0v6M22.0 160.8h6M25.0 157.8v6M31.4 161.0h6M34.4 158.0v6M40.7 161.1h6M43.7 158.1v6M50.1 161.2h6M53.1 158.2v6M59.4 160.7h6M62.4 157.7v6M68.8 162.2h6M71.8 159.2v6M78.2 161.7h6M81.2 158.7v6M87.5 161.9h6M90.5 158.9v6M96.9 162.8h6M99.9 159.8v6M106.2 162.3h6M109.2 159.3v6M115.6 162.5h6M118.6 159.5v6M125.0 162.7h6M128.0 159.7v6M134.3 163.0h6M137.3 160.0v6M143.7 163.9h6M146.7 160.9v6M256.0 163.6h6M259.0 160.6v6M265.4 163.3h6M268.4 160.3v6M274.7 163.0h6M277.7 160.0v6M284.1 161.9h6M287.1 158.9v6M293.4 162.3h6M296.4 159.3v6M302.8 162.6h6M305.8 159.6v6M312.2 162.2h6M315.2 159.2v6M321.5 161.1h6M324.5 158.1v6M330.9 161.4h6M333.9 158.4v6M340.2 160.3h6M343.2 157.3v6M349.6 159.9h6M352.6 156.9v6M359.0 159.6h6M362.0 156.6v6M368.3 158.5h6M371.3 155.5v6M377.7 159.6h6M380.7 156.6v6M20.8 216.1h6M23.8 213.1v6M30.1 217.2h6M33.1 214.2v6M39.5 217.0h6M42.5 214.0v6M48.9 217.4h6M51.9 214.4v6M58.2 217.7h6M61.2 214.7v6M67.6 218.6h6M70.6 215.6v6M76.9 218.1h6M79.9 215.1v6M86.3 219.0h6M89.3 216.0v6M95.7 217.7h6M98.7 214.7v6M105.0 218.4h6M108.0 215.4v6M114.4 218.5h6M117.4 215.5v6M123.7 218.5h6M126.7 215.5v6M133.1 217.7h6M136.1 214.7v6M273.5 218.0h6M276.5 215.0v6M282.9 217.9h6M285.9 214.9v6M292.2 217.1h6M295.2 214.1v6M301.6 217.6h6M304.6 214.6v6M310.9 216.6h6M313.9 213.6v6M320.3 217.7h6M323.3 214.7v6M329.7 216.7h6M332.7 213.7v6M339.0 216.3h6M342.0 213.3v6M348.4 215.8h6M351.4 212.8v6M357.7 216.0h6M360.7 213.0v6M367.1 215.4h6M370.1 212.4v6M376.5 214.0h6M379.5 211.0v6M385.8 214.1h6M388.8 211.1v6M30.6 269.0h6M33.6 266.0v6M39.9 270.3h6M42.9 267.3v6M49.3 271.6h6M52.3 268.6v6M58.6 272.1h6M61.6 269.1v6M68.0 272.0h6M71.0 269.0v6M77.4 272.5h6M80.4 269.5v6M86.7 272.3h6M89.7 269.3v6M96.1 274.2h6M99.1 271.2v6M105.4 273.9h6M108.4 270.9v6M114.8 274.3h6M117.8 271.3v6M124.2 274.6h6M127.2 271.6v6M133.5 274.9h6M136.5 271.9v6M142.9 275.1h6M145.9 272.1v6M152.2 274.6h6M155.2 271.6v6M161.6 275.3h6M164.6 272.3v6M171.0 274.6h6M174.0 271.6v6M180.3 275.3h6M183.3 272.3v6M189.7 275.2h6M192.7 272.2v6M199.0 275.0h6M202.0 272.0v6M208.4 274.1h6M211.4 271.1v6M217.8 274.5h6M220.8 271.5v6M227.1 273.5h6M230.1 270.5v6M236.5 273.9h6M239.5 270.9v6M245.8 274.2h6M248.8 271.2v6M255.2 272.4h6M258.2 269.4v6M264.6 272.7h6M267.6 269.7v6M273.9 271.6h6M276.9 268.6v6M283.3 271.9h6M286.3 268.9v6M292.6 271.5h6M295.6 268.5v6M302.0 271.1h6M305.0 268.1v6M311.4 271.4h6M314.4 268.4v6M320.7 271.0h6M323.7 268.0v6M330.1 269.9h6M333.1 266.9v6M339.4 269.5h6M342.4 266.5v6M348.8 268.4h6M351.8 265.4v6M358.2 269.4h6M361.2 266.4v6M367.5 268.2h6M370.5 265.2v6M60.1 325.9h6M63.1 322.9v6M69.4 326.9h6M72.4 323.9v6M78.8 327.2h6M81.8 324.2v6M88.2 327.5h6M91.2 324.5v6M97.5 327.1h6M100.5 324.1v6M106.9 328.0h6M109.9 325.0v6M116.2 328.3h6M119.2 325.3v6M125.6 327.8h6M128.6 324.8v6M135.0 329.5h6M138.0 326.5v6M144.3 329.0h6M147.3 326.0v6M153.7 329.9h6M156.7 326.9v6M163.0 329.5h6M166.0 326.5v6M172.4 329.7h6M175.4 326.7v6M181.8 329.8h6M184.8 326.8v6M191.1 330.0h6M194.1 327.0v6M200.5 330.1h6M203.5 327.1v6M209.8 329.4h6M212.8 326.4v6M219.2 330.8h6M222.2 327.8v6M228.6 329.4h6M231.6 326.4v6M237.9 330.0h6M240.9 327.0v6M247.3 329.1h6M250.3 326.1v6M256.6 329.5h6M259.6 326.5v6M266.0 329.9h6M269.0 326.9v6M275.4 328.1h6M278.4 325.1v6M284.7 328.3h6M287.7 325.3v6M294.1 327.7h6M297.1 324.7v6M303.4 327.1h6M306.4 324.1v6M312.8 327.1h6M315.8 324.1v6M322.2 325.7h6M325.2 322.7v6M331.5 324.9h6M334.5 321.9v6M340.9 324.8h6M343.9 321.8v6M149.1 385.4h6M152.1 382.4v6M158.4 385.4h6M161.4 382.4v6M167.8 384.6h6M170.8 381.6v6M177.1 385.2h6M180.1 382.2v6M186.5 385.0h6M189.5 382.0v6M195.9 384.9h6M198.9 381.9v6M205.2 384.7h6M208.2 381.7v6M214.6 384.5h6M217.6 381.5v6M223.9 384.2h6M226.9 381.2v6M233.3 384.0h6M236.3 381.0v6M242.7 384.4h6M245.7 381.4v6" stroke="#e0d81c" stroke-width="1.1" fill="none"/><path d="M79.1 69.6h6M82.1 66.6v6M88.5 69.0h6M91.5 66.0v6M97.8 68.3h6M100.8 65.3v6M107.2 68.4h6M110.2 65.4v6M116.5 69.2h6M119.5 66.2v6M125.9 70.0h6M128.9 67.0v6M135.3 68.8h6M138.3 65.8v6M144.6 69.7h6M147.6 66.7v6M154.0 69.1h6M157.0 66.1v6M163.3 69.3h6M166.3 66.3v6M172.7 70.2h6M175.7 67.2v6M182.1 71.0h6M185.1 68.0v6M191.4 70.5h6M194.4 67.5v6M200.8 71.3h6M203.8 68.3v6M210.1 70.7h6M213.1 67.7v6M219.5 70.0h6M222.5 67.0v6M228.9 70.0h6M231.9 67.0v6M238.2 70.7h6M241.2 67.7v6M247.6 69.9h6M250.6 66.9v6M256.9 71.2h6M259.9 68.2v6M266.3 71.1h6M269.3 68.1v6M275.7 70.2h6M278.7 67.2v6M285.0 70.7h6M288.0 67.7v6M294.4 69.8h6M297.4 66.8v6M303.7 69.6h6M306.7 66.6v6M313.1 68.7h6M316.1 65.7v6M322.5 68.4h6M325.5 65.4v6M36.3 125.0h6M39.3 122.0v6M45.7 126.0h6M48.7 123.0v6M55.0 126.9h6M58.0 123.9v6M64.4 126.3h6M67.4 123.3v6M73.8 127.1h6M76.8 124.1v6M83.1 126.5h6M86.1 123.5v6M92.5 125.8h6M95.5 122.8v6M101.8 127.2h6M104.8 124.2v6M111.2 126.5h6M114.2 123.5v6M120.6 126.4h6M123.6 123.4v6M129.9 125.6h6M132.9 122.6v6M139.3 126.9h6M142.3 123.9v6M148.6 126.1h6M151.6 123.1v6M158.0 126.0h6M161.0 123.0v6M167.4 125.9h6M170.4 122.9v6M176.7 125.8h6M179.7 122.8v6M186.1 125.7h6M189.1 122.7v6M195.4 125.0h6M198.4 122.0v6M204.8 125.7h6M207.8 122.7v6M214.2 125.7h6M217.2 122.7v6M223.5 126.4h6M226.5 123.4v6M232.9 125.7h6M235.9 122.7v6M242.2 125.8h6M245.2 122.8v6M251.6 125.8h6M254.6 122.8v6M261.0 126.6h6M264.0 123.6v6M270.3 125.2h6M273.3 122.2v6M279.7 126.0h6M282.7 123.0v6M289.0 125.3h6M292.0 122.3v6M298.4 126.7h6M301.4 123.7v6M307.8 125.3h6M310.8 122.3v6M317.1 125.9h6M320.1 122.9v6M326.5 125.8h6M329.5 122.8v6M335.8 125.6h6M338.8 122.6v6M345.2 125.4h6M348.2 122.4v6M354.6 125.1h6M357.6 122.1v6M363.9 124.8h6M366.9 121.8v6M23.1 177.9h6M26.1 174.9v6M32.4 178.2h6M35.4 175.2v6M41.8 178.6h6M44.8 175.6v6M51.1 178.3h6M54.1 175.3v6M60.5 179.3h6M63.5 176.3v6M69.9 179.7h6M72.9 176.7v6M79.2 180.1h6M82.2 177.1v6M88.6 180.4h6M91.6 177.4v6M97.9 180.8h6M100.9 177.8v6M107.3 181.1h6M110.3 178.1v6M116.7 181.4h6M119.7 178.4v6M126.0 181.7h6M129.0 178.7v6M135.4 182.6h6M138.4 179.6v6M266.4 180.2h6M269.4 177.2v6M275.8 179.9h6M278.8 176.9v6M285.1 178.9h6M288.1 175.9v6M294.5 178.6h6M297.5 175.6v6M303.9 178.3h6M306.9 175.3v6M313.2 178.0h6M316.2 175.0v6M322.6 178.5h6M325.6 175.5v6M331.9 178.3h6M334.9 175.3v6M341.3 178.0h6M344.3 175.0v6M350.7 177.8h6M353.7 174.8v6M360.0 177.6h6M363.0 174.6v6M369.4 178.1h6M372.4 175.1v6M378.7 177.1h6M381.7 174.1v6M21.4 234.4h6M24.4 231.4v6M30.8 234.7h6M33.8 231.7v6M40.2 234.3h6M43.2 231.3v6M49.5 235.2h6M52.5 232.2v6M58.9 235.4h6M61.9 232.4v6M68.2 234.9h6M71.2 231.9v6M77.6 235.8h6M80.6 232.8v6M87.0 235.9h6M90.0 232.9v6M96.3 236.0h6M99.3 233.0v6M105.7 236.2h6M108.7 233.2v6M115.0 235.6h6M118.0 232.6v6M124.4 236.4h6M127.4 233.4v6M133.8 236.6h6M136.8 233.6v6M264.8 236.7h6M267.8 233.7v6M274.2 237.2h6M277.2 234.2v6M283.5 237.6h6M286.5 234.6v6M292.9 237.2h6M295.9 234.2v6M302.2 236.1h6M305.2 233.1v6M311.6 236.3h6M314.6 233.3v6M321.0 234.3h6M324.0 231.3v6M330.3 234.5h6M333.3 231.5v6M339.7 233.2h6M342.7 230.2v6M349.0 233.2h6M352.0 230.2v6M358.4 231.9h6M361.4 228.9v6M367.8 231.9h6M370.8 228.9v6M377.1 231.2h6M380.1 228.2v6M38.0 288.5h6M41.0 285.5v6M47.4 289.9h6M50.4 286.9v6M56.7 291.2h6M59.7 288.2v6M66.1 290.3h6M69.1 287.3v6M75.5 290.8h6M78.5 287.8v6M84.8 292.7h6M87.8 289.7v6M94.2 292.3h6M97.2 289.3v6M103.5 292.6h6M106.5 289.6v6M112.9 293.5h6M115.9 290.5v6M122.3 292.3h6M125.3 289.3v6M131.6 292.4h6M134.6 289.4v6M141.0 293.1h6M144.0 290.1v6M150.3 293.1h6M153.3 290.1v6M159.7 292.4h6M162.7 289.4v6M169.1 293.0h6M172.1 290.0v6M178.4 293.5h6M181.4 290.5v6M187.8 292.0h6M190.8 289.0v6M197.1 293.2h6M200.1 290.2v6M206.5 293.0h6M209.5 290.0v6M215.9 292.1h6M218.9 289.1v6M225.2 291.2h6M228.2 288.2v6M234.6 290.9h6M237.6 287.9v6M243.9 291.4h6M246.9 288.4v6M253.3 291.9h6M256.3 288.9v6M262.7 291.0h6M265.7 288.0v6M272.0 290.8h6M275.0 287.8v6M281.4 290.6h6M284.4 287.6v6M290.7 291.0h6M293.7 288.0v6M300.1 290.1h6M303.1 287.1v6M309.5 290.5h6M312.5 287.5v6M318.8 289.4h6M321.8 286.4v6M328.2 289.1h6M331.2 286.1v6M337.5 288.6h6M340.5 285.6v6M346.9 287.5h6M349.9 284.5v6M356.3 287.6h6M359.3 284.6v6M365.6 287.0h6M368.6 284.0v6M85.0 346.3h6M88.0 343.3v6M94.3 345.4h6M97.3 342.4v6M103.7 345.9h6M106.7 342.9v6M113.0 347.8h6M116.0 344.8v6M122.4 347.5h6M125.4 344.5v6M131.8 347.9h6M134.8 344.9v6M141.1 348.3h6M144.1 345.3v6M150.5 347.9h6M153.5 344.9v6M159.8 348.9h6M162.8 345.9v6M169.2 349.1h6M172.2 346.1v6M178.6 349.2h6M181.6 346.2v6M187.9 350.0h6M190.9 347.0v6M197.3 349.2h6M200.3 346.2v6M206.6 349.9h6M209.6 346.9v6M216.0 349.7h6M219.0 346.7v6M225.4 349.5h6M228.4 346.5v6M234.7 348.4h6M237.7 345.4v6M244.1 348.1h6M247.1 345.1v6M253.4 347.6h6M256.4 344.6v6M262.8 347.1h6M265.8 344.1v6M272.2 347.3h6M275.2 344.3v6M281.5 345.3h6M284.5 342.3v6M290.9 344.6h6M293.9 341.6v6M300.2 345.4h6M303.2 342.4v6M309.6 344.0h6M312.6 341.0v6M319.0 344.0h6M322.0 341.0v6" stroke="#1cd0d4" stroke-width="1.1" fill="none"/></svg>
<div class="sb" style="left:424px;top:81px;width:13px;height:413px;background:#f7f7f7"></div>
<div class="sbb" style="left:424px;top:81px;width:13px;height:13px"></div>
<svg class="a" style="left:427px;top:85px" width="7" height="4"><path d="M0 4L3.5 0L7 4z" fill="#a0a0a0"/></svg>
<div class="sb" style="left:8px;top:494px;width:416px;height:13px;background:#f7f7f7"></div>
<div class="sbb" style="left:8px;top:494px;width:13px;height:13px"></div>
<svg class="a" style="left:12px;top:497px" width="4" height="7"><path d="M4 0L0 3.5L4 7z" fill="#a0a0a0"/></svg>
<div class="win" style="left:644px;top:60px;width:549px;height:194px"><div class="tb"></div>
<div class="a" style="left:6.8px;top:5px"><svg width="13" height="13" viewBox="0 0 13 13"><path d="M6.5 0.8l5.5 3v5.5l-5.5 3-5.5-3v-5.5z" fill="#fff" stroke="#222" stroke-width="0.9"/><ellipse cx="6.5" cy="7.5" rx="5" ry="3.8" fill="#0a3cff"/><ellipse cx="6.5" cy="6.8" rx="3.5" ry="2.6" fill="#10e070"/><ellipse cx="6.5" cy="6" rx="1.8" ry="1.3" fill="#ff5010"/></svg></div>
<div class="wt" style="left:22.7px;top:9px;color:#a3a9b1;transform:scaleX(0.932)">Surface Plot - S00000_Flat.bmp</div>
<div class="wb" style="left:514px;top:6px"></div>
<svg class="a" style="left:521.5px;top:8.5px" width="10" height="9"><path d="M1.8 1.8L8.2 7.2M8.2 1.8L1.8 7.2" stroke="#5b6470" stroke-width="3" stroke-linecap="round"/><path d="M1.8 1.8L8.2 7.2M8.2 1.8L1.8 7.2" stroke="#fff" stroke-width="1.4" stroke-linecap="round"/></svg>
<div class="wb" style="left:487px;top:6px"></div>
<div class="a" style="left:495px;top:9px;width:9px;height:7px;border:1.5px solid #5b6470;border-radius:2px;background:#fff"></div><div class="a" style="left:497.5px;top:11.5px;width:4px;height:2px;background:#5b6470"></div>
<div class="wb" style="left:460px;top:6px"></div>
<div class="a" style="left:468px;top:12px;width:9px;height:4px;border:1.2px solid #5b6470;border-radius:2px;background:#fff"></div>
</div>
<div class="cl" style="left:650px;top:83px;width:536px;height:164px"></div>
<svg class="a" style="left:650px;top:83px" width="536" height="164" viewBox="650 83 536 164"><g stroke="#444" stroke-width="1" fill="none"><path d="M662.5 156.5V122.5L954.5 91.5V127M954.5 91.5L1124.5 143.5V178.5"/></g><polygon points="663.0,157.0 830.0,209.0 1124.5,178.5 1085.0,165.0 1065.0,157.0 1040.0,146.0 1000.0,136.0 954.5,127.0" fill="#0000ff"/><polygon points="800,160 840,152 900,150 960,155 1000,165 990,175 940,182 880,184 830,176" fill="#000060" opacity="0.35"/><polygon points="732,160 750,150 780,145 810,147 835,155 860,165 885,175 895,184 870,188 840,186 805,180 770,175 745,170" fill="#2aa8ff"/><polygon points="854,141.9 886.4,136.5 922.2,132.9 958,132.2 986.7,136.5 1015.4,143.7 1040.5,150.8 1054.8,159.8 1047.7,168.8 1022.6,168.8 1004.7,165.2 986.7,158 965.2,152.6 933,149 907.9,147.3 879.2,147.3 861.3,145.5" fill="#2aa8ff"/><clipPath id="sc"><polygon points="663.0,157.0 830.0,209.0 1124.5,178.5 1085.0,165.0 1065.0,157.0 1040.0,146.0 1000.0,136.0 954.5,127.0"/></clipPath><path d="M663.0 157.0L954.5 127.0M672.3 159.9L963.8 129.9M681.6 162.8L973.1 132.8M690.8 165.7L982.3 135.7M700.1 168.6L991.6 138.6M709.4 171.4L1000.9 141.4M718.7 174.3L1010.2 144.3M727.9 177.2L1019.4 147.2M737.2 180.1L1028.7 150.1M746.5 183.0L1038.0 153.0M755.8 185.9L1047.3 155.9M765.1 188.8L1056.6 158.8M774.3 191.7L1065.8 161.7M783.6 194.6L1075.1 164.6M792.9 197.4L1084.4 167.4M802.2 200.3L1093.7 170.3M811.4 203.2L1102.9 173.2M820.7 206.1L1112.2 176.1M830.0 209.0L1121.5 179.0M663.0 157.0L830.0 209.0M668.8 156.4L835.8 208.4M674.7 155.8L841.7 207.8M680.5 155.2L847.5 207.2M686.3 154.6L853.3 206.6M692.1 154.0L859.1 206.0M698.0 153.4L865.0 205.4M703.8 152.8L870.8 204.8M709.6 152.2L876.6 204.2M715.5 151.6L882.5 203.6M721.3 151.0L888.3 203.0M727.1 150.4L894.1 202.4M733.0 149.8L900.0 201.8M738.8 149.2L905.8 201.2M744.6 148.6L911.6 200.6M750.5 148.0L917.5 200.0M756.3 147.4L923.3 199.4M762.1 146.8L929.1 198.8M767.9 146.2L934.9 198.2M773.8 145.6L940.8 197.6M779.6 145.0L946.6 197.0M785.4 144.4L952.4 196.4M791.3 143.8L958.3 195.8M797.1 143.2L964.1 195.2M802.9 142.6L969.9 194.6M808.8 142.0L975.8 194.0M814.6 141.4L981.6 193.4M820.4 140.8L987.4 192.8M826.2 140.2L993.2 192.2M832.1 139.6L999.1 191.6M837.9 139.0L1004.9 191.0M843.7 138.4L1010.7 190.4M849.6 137.8L1016.6 189.8M855.4 137.2L1022.4 189.2M861.2 136.6L1028.2 188.6M867.0 136.0L1034.0 188.0M872.9 135.4L1039.9 187.4M878.7 134.8L1045.7 186.8M884.5 134.2L1051.5 186.2M890.4 133.6L1057.4 185.6M896.2 133.0L1063.2 185.0M902.0 132.4L1069.0 184.4M907.9 131.8L1074.9 183.8M913.7 131.2L1080.7 183.2M919.5 130.6L1086.5 182.6M925.4 130.0L1092.3 182.0M931.2 129.4L1098.2 181.4M937.0 128.8L1104.0 180.8M942.8 128.2L1109.8 180.2M948.7 127.6L1115.7 179.6M954.5 127.0L1121.5 179.0M668.8 156.4L672.3 159.9M674.7 155.8L681.6 162.8M680.5 155.2L690.8 165.7M686.3 154.6L700.1 168.6M692.1 154.0L709.4 171.4M698.0 153.4L718.7 174.3M703.8 152.8L727.9 177.2M709.6 152.2L737.2 180.1M715.5 151.6L746.5 183.0M721.3 151.0L755.8 185.9M727.1 150.4L765.1 188.8M733.0 149.8L774.3 191.7M738.8 149.2L783.6 194.6M744.6 148.6L792.9 197.4M750.5 148.0L802.2 200.3M756.3 147.4L811.4 203.2M762.1 146.8L820.7 206.1M767.9 146.2L830.0 209.0M773.8 145.6L835.8 208.4M779.6 145.0L841.7 207.8M785.4 144.4L847.5 207.2M791.3 143.8L853.3 206.6M797.1 143.2L859.1 206.0M802.9 142.6L865.0 205.4M808.8 142.0L870.8 204.8M814.6 141.4L876.6 204.2M820.4 140.8L882.5 203.6M826.2 140.2L888.3 203.0M832.1 139.6L894.1 202.4M837.9 139.0L900.0 201.8M843.7 138.4L905.8 201.2M849.6 137.8L911.6 200.6M855.4 137.2L917.5 200.0M861.2 136.6L923.3 199.4M867.0 136.0L929.1 198.8M872.9 135.4L934.9 198.2M878.7 134.8L940.8 197.6M884.5 134.2L946.6 197.0M890.4 133.6L952.4 196.4M896.2 133.0L958.3 195.8M902.0 132.4L964.1 195.2M907.9 131.8L969.9 194.6M913.7 131.2L975.8 194.0M919.5 130.6L981.6 193.4M925.4 130.0L987.4 192.8M931.2 129.4L993.2 192.2M937.0 128.8L999.1 191.6M942.8 128.2L1004.9 191.0M948.7 127.6L1010.7 190.4M954.5 127.0L1016.6 189.8M963.8 129.9L1022.4 189.2M973.1 132.8L1028.2 188.6M982.3 135.7L1034.0 188.0M991.6 138.6L1039.9 187.4M1000.9 141.4L1045.7 186.8M1010.2 144.3L1051.5 186.2M1019.4 147.2L1057.4 185.6M1028.7 150.1L1063.2 185.0M1038.0 153.0L1069.0 184.4M1047.3 155.9L1074.9 183.8M1056.6 158.8L1080.7 183.2M1065.8 161.7L1086.5 182.6M1075.1 164.6L1092.3 182.0M1084.4 167.4L1098.2 181.4M1093.7 170.3L1104.0 180.8M1102.9 173.2L1109.8 180.2M1112.2 176.1L1115.7 179.6" stroke="#000010" stroke-width="0.8" opacity="0.62" clip-path="url(#sc)"/><polygon points="722,166 830,209 1124.5,178.5 1124.5,176 830,201 740,165" fill="#0000c8" opacity="0.6"/><path d="M1124.5 143.5h4M1124.5 155h3M1124.5 166.5h3M1124.5 178.5h4" stroke="#333"/><path d="M663.0 157.0l-1 4M679.7 162.2l-1 4M696.4 167.4l-1 4M713.1 172.6l-1 4M729.8 177.8l-1 4M746.5 183.0l-1 4M763.2 188.2l-1 4M779.9 193.4l-1 4M796.6 198.6l-1 4M813.3 203.8l-1 4M830.0 209.0l-1 4M830.0 209.0l0 4M859.1 206.0l0 4M888.3 203.0l0 4M917.5 200.0l0 4M946.6 197.0l0 4M975.8 194.0l0 4M1004.9 191.0l0 4M1034.0 188.0l0 4M1063.2 185.0l0 4M1092.3 182.0l0 4M1121.5 179.0l0 4" stroke="#333" stroke-width="0.8"/><text x="660" y="171" font-size="8.6" font-family="Liberation Sans" fill="#111">-1</text><text x="688" y="184" font-size="8.6" font-family="Liberation Sans" fill="#111">-0.6</text><text x="722" y="194" font-size="8.6" font-family="Liberation Sans" fill="#111">-0.2</text><text x="760" y="203" font-size="8.6" font-family="Liberation Sans" fill="#111">0.2</text><text x="794" y="213" font-size="8.6" font-family="Liberation Sans" fill="#111">0.6</text><text x="829" y="223" font-size="8.6" font-family="Liberation Sans" fill="#111">1</text><text x="657" y="190" font-size="11" font-family="Liberation Sans" fill="#111">Y</text><text x="880" y="219" font-size="8.6" font-family="Liberation Sans" fill="#111">0.6</text><text x="941" y="212" font-size="8.6" font-family="Liberation Sans" fill="#111">0.2</text><text x="998" y="207" font-size="8.6" font-family="Liberation Sans" fill="#111">-0.2</text><text x="1057" y="201" font-size="8.6" font-family="Liberation Sans" fill="#111">-0.6</text><text x="1122" y="195" font-size="8.6" font-family="Liberation Sans" fill="#111">-1</text><text x="1039" y="217" font-size="11" font-family="Liberation Sans" fill="#111">X</text><text x="1130" y="147" font-size="8.6" font-family="Liberation Sans" fill="#111">0.4</text><text x="1129" y="182" font-size="8.6" font-family="Liberation Sans" fill="#111">-0.1</text><text transform="translate(1153,146) rotate(90)" font-size="9" font-family="Liberation Sans" fill="#222">Waves</text></svg>
<div class="sb" style="left:1173px;top:84px;width:13px;height:150px;background:#f7f7f7"></div>
<div class="sbb" style="left:1173px;top:84px;width:13px;height:13px"></div>
<svg class="a" style="left:1176px;top:88px" width="7" height="4"><path d="M0 4L3.5 0L7 4z" fill="#000"/></svg>
<div class="sbb" style="left:1173px;top:135px;width:13px;height:13px"></div>
<div class="sbb" style="left:1173px;top:221px;width:13px;height:13px"></div>
<svg class="a" style="left:1176px;top:226px" width="7" height="4"><path d="M0 0L3.5 4L7 0z" fill="#000"/></svg>
<div class="sb" style="left:650px;top:234px;width:523px;height:13px;background:#f7f7f7"></div>
<div class="sbb" style="left:650px;top:234px;width:13px;height:13px"></div>
<svg class="a" style="left:654px;top:237px" width="4" height="7"><path d="M4 0L0 3.5L4 7z" fill="#000"/></svg>
<div class="sbb" style="left:744px;top:234px;width:13px;height:13px"></div>
<div class="sbb" style="left:1160px;top:234px;width:13px;height:13px"></div>
<svg class="a" style="left:1165px;top:237px" width="4" height="7"><path d="M0 0L4 3.5L0 7z" fill="#000"/></svg>
<div class="win" style="left:728px;top:264px;width:240px;height:225px"><div class="tb"></div>
<div class="a" style="left:6.8px;top:5px"><svg width="13" height="13" viewBox="0 0 13 13"><path d="M4 4h7v8H4z" fill="#eee" stroke="#222" stroke-width="0.9"/><path d="M1 9l3-8h7l-3 8z" fill="#00e8f0" stroke="#222" stroke-width="0.9"/></svg></div>
<div class="wt" style="left:22.7px;top:9px;color:#a3a9b1;transform:scaleX(0.932)">Aberrations - S00000_Flat.bmp</div>
<div class="wb" style="left:205.5px;top:6px"></div>
<svg class="a" style="left:213.0px;top:8.5px" width="10" height="9"><path d="M1.8 1.8L8.2 7.2M8.2 1.8L1.8 7.2" stroke="#5b6470" stroke-width="3" stroke-linecap="round"/><path d="M1.8 1.8L8.2 7.2M8.2 1.8L1.8 7.2" stroke="#fff" stroke-width="1.4" stroke-linecap="round"/></svg>
<div class="wb" style="left:178.5px;top:6px"></div>
<div class="a" style="left:186.5px;top:9px;width:9px;height:7px;border:1.5px solid #5b6470;border-radius:2px;background:#fff"></div><div class="a" style="left:189.0px;top:11.5px;width:4px;height:2px;background:#5b6470"></div>
<div class="wb" style="left:151.5px;top:6px"></div>
<div class="a" style="left:159.5px;top:12px;width:9px;height:4px;border:1.2px solid #5b6470;border-radius:2px;background:#fff"></div>
</div>
<div class="cl" style="left:735px;top:288px;width:225px;height:193px;border-top:1px solid #6d6d6d;border-left:1px solid #6d6d6d"></div>
<div class="a" style="left:737px;top:292px;width:208px;height:176px;overflow:hidden">
<div class="t" style="left:0;top:0.0px;font-family:'Liberation Mono',monospace;font-size:10.4px;color:#1a1a1a;-webkit-text-stroke:0.15px #1a1a1a;white-space:pre">Output Units: Waves</div>
<div class="t" style="left:0;top:25.0px;font-family:'Liberation Mono',monospace;font-size:10.4px;color:#1a1a1a;-webkit-text-stroke:0.15px #1a1a1a;white-space:pre">RMS             0,029</div>
<div class="t" style="left:0;top:37.5px;font-family:'Liberation Mono',monospace;font-size:10.4px;color:#1a1a1a;-webkit-text-stroke:0.15px #1a1a1a;white-space:pre">Peak-Valley     0,13</div>
<div class="t" style="left:0;top:50.0px;font-family:'Liberation Mono',monospace;font-size:10.4px;color:#1a1a1a;-webkit-text-stroke:0.15px #1a1a1a;white-space:pre">Strehl Ratio    0,97</div>
<div class="t" style="left:0;top:62.5px;font-family:'Liberation Mono',monospace;font-size:10.4px;color:#1a1a1a;-webkit-text-stroke:0.15px #1a1a1a;white-space:pre">Tilt            Removed</div>
<div class="t" style="left:0;top:75.0px;font-family:'Liberation Mono',monospace;font-size:10.4px;color:#1a1a1a;-webkit-text-stroke:0.15px #1a1a1a;white-space:pre">Defocus         Removed</div>
<div class="t" style="left:0;top:87.5px;font-family:'Liberation Mono',monospace;font-size:10.4px;color:#1a1a1a;-webkit-text-stroke:0.15px #1a1a1a;white-space:pre">Astigmatism     0,09      -2,9 deg</div>
<div class="t" style="left:0;top:100.0px;font-family:'Liberation Mono',monospace;font-size:10.4px;color:#1a1a1a;-webkit-text-stroke:0.15px #1a1a1a;white-space:pre">Coma            Removed</div>
<div class="t" style="left:0;top:112.5px;font-family:'Liberation Mono',monospace;font-size:10.4px;color:#1a1a1a;-webkit-text-stroke:0.15px #1a1a1a;white-space:pre">Spherical       0,05</div>
<div class="t" style="left:0;top:137.5px;font-family:'Liberation Mono',monospace;font-size:10.4px;color:#1a1a1a;-webkit-text-stroke:0.15px #1a1a1a;white-space:pre">Scale          0,50</div>
<div class="t" style="left:0;top:150.0px;font-family:'Liberation Mono',monospace;font-size:10.4px;color:#1a1a1a;-webkit-text-stroke:0.15px #1a1a1a;white-space:pre">Wavelength     532,0 nm</div>
<div class="t" style="left:0;top:162.5px;font-family:'Liberation Mono',monospace;font-size:10.4px;color:#1a1a1a;-webkit-text-stroke:0.15px #1a1a1a;white-space:pre">Data Points    518</div>
</div>
<div class="sb" style="left:946px;top:289px;width:14px;height:179px;background:#f0f0f0"></div>
<svg class="a" style="left:949px;top:296px" width="8" height="5"><path d="M0.5 4.5L4 1L7.5 4.5" stroke="#aaa" fill="none" stroke-width="1.2"/></svg>
<svg class="a" style="left:949px;top:458px" width="8" height="5"><path d="M0.5 0.5L4 4L7.5 0.5" stroke="#aaa" fill="none" stroke-width="1.2"/></svg>
<div class="sb" style="left:736px;top:468px;width:224px;height:13px;background:#f0f0f0"></div>
<div class="a" style="left:750px;top:470px;width:179px;height:9px;background:#cdcdcd"></div>
<svg class="a" style="left:739px;top:471px" width="5" height="8"><path d="M4.5 0.5L1 4L4.5 7.5" stroke="#333" fill="none" stroke-width="1.4"/></svg>
<svg class="a" style="left:936px;top:471px" width="5" height="8"><path d="M0.5 0.5L4 4L0.5 7.5" stroke="#333" fill="none" stroke-width="1.4"/></svg>
<svg class="a" style="left:950px;top:470px" width="8" height="8"><path d="M7 1v1M5 3v1M7 3v1M3 5v1M5 5v1M7 5v1" stroke="#aaa" stroke-width="1"/></svg>
<div class="win" style="left:541px;top:494px;width:648px;height:156px"><div class="tb"></div>
<div class="a" style="left:6.8px;top:6px"><svg width="13" height="13" viewBox="0 0 13 13"><path d="M6.5 0.8l5.5 3v5.5l-5.5 3-5.5-3v-5.5z" fill="#fff" stroke="#222" stroke-width="0.9"/><ellipse cx="6.5" cy="7.5" rx="5" ry="3.8" fill="#0a3cff"/><ellipse cx="6.5" cy="6.8" rx="3.5" ry="2.6" fill="#10e070"/><ellipse cx="6.5" cy="6" rx="1.8" ry="1.3" fill="#ff5010"/></svg></div>
<div class="wt" style="left:22.7px;top:9px;color:#a3a9b1;transform:scaleX(0.932)">Profile Plot - S00000_Flat.bmp</div>
<div class="wb" style="left:615px;top:7px"></div>
<svg class="a" style="left:622.5px;top:9.5px" width="10" height="9"><path d="M1.8 1.8L8.2 7.2M8.2 1.8L1.8 7.2" stroke="#5b6470" stroke-width="3" stroke-linecap="round"/><path d="M1.8 1.8L8.2 7.2M8.2 1.8L1.8 7.2" stroke="#fff" stroke-width="1.4" stroke-linecap="round"/></svg>
<div class="wb" style="left:588px;top:7px"></div>
<div class="a" style="left:596px;top:10px;width:9px;height:7px;border:1.5px solid #5b6470;border-radius:2px;background:#fff"></div><div class="a" style="left:598.5px;top:12.5px;width:4px;height:2px;background:#5b6470"></div>
<div class="wb" style="left:561px;top:7px"></div>
<div class="a" style="left:569px;top:13px;width:9px;height:4px;border:1.2px solid #5b6470;border-radius:2px;background:#fff"></div>
</div>
<div class="cl" style="left:547px;top:518px;width:636px;height:125px"></div>
<svg class="a" style="left:547px;top:518px" width="636" height="125" viewBox="547 518 636 125"><path d="M585.5 525.5H1178.5V600M585.5 525.5V600H1178.5" stroke="#333" stroke-width="1.3" fill="none"/><path d="M585.5 600v4M609.2 600v4M632.9 600v4M656.7 600v4M680.4 600v4M704.1 600v4M727.8 600v4M751.5 600v4M775.3 600v4M799.0 600v4M822.7 600v4M846.4 600v4M870.1 600v4M893.9 600v4M917.6 600v4M941.3 600v4M965.0 600v4M988.7 600v4M1012.5 600v4M1036.2 600v4M1059.9 600v4M1083.6 600v4M1107.3 600v4M1131.1 600v4M1154.8 600v4M1178.5 600v4M581 570.6h4.5M581 585.2h4.5M581 599.8h4.5" stroke="#333" stroke-width="1"/><path d="M585.6 599.5L589 593L592 589L596 587.2L600 586.4L658 586L680 588L704 591L720 592L740 593L750 591.6L770 591L776 599.5M981 599.5L987.8 590.7L990.7 592L1017.5 592L1050 588.8L1075 587.2L1103.8 587.4L1123 588L1146 587.4L1166 587L1171.8 599.5" stroke="#222" stroke-width="1" fill="none"/><text x="585" y="615" font-size="8.5" text-anchor="middle" font-family="Liberation Sans" fill="#111">-1</text><text x="704" y="615" font-size="8.5" text-anchor="middle" font-family="Liberation Sans" fill="#111">-0.6</text><text x="822" y="615" font-size="8.5" text-anchor="middle" font-family="Liberation Sans" fill="#111">-0.2</text><text x="940" y="615" font-size="8.5" text-anchor="middle" font-family="Liberation Sans" fill="#111">0.2</text><text x="1059" y="615" font-size="8.5" text-anchor="middle" font-family="Liberation Sans" fill="#111">0.6</text><text x="1177" y="615" font-size="8.5" text-anchor="middle" font-family="Liberation Sans" fill="#111">1</text><text x="580" y="573.5" font-size="8.5" text-anchor="end" font-family="Liberation Sans" fill="#111">0.15</text><text x="580" y="588" font-size="8.5" text-anchor="end" font-family="Liberation Sans" fill="#111">0.05</text><text x="580" y="602.5" font-size="8.5" text-anchor="end" font-family="Liberation Sans" fill="#111">-0.05</text><text x="882" y="627" font-size="10" text-anchor="middle" font-family="Liberation Sans" fill="#111">Profile along 0 degs</text><text transform="translate(557,578) rotate(-90)" font-size="10" font-family="Liberation Sans" fill="#111">Waves</text></svg>
<div class="sb" style="left:547px;top:631px;width:636px;height:12px;background:#f4f4f4"></div>
<div class="sbb" style="left:548px;top:631px;width:12px;height:12px"></div>
<svg class="a" style="left:552px;top:634px" width="4" height="7"><path d="M4 0L0 3.5L4 7z" fill="#000"/></svg>
<div class="sbb" style="left:560px;top:631px;width:9px;height:12px"></div>
<div class="sbb" style="left:1170px;top:631px;width:12px;height:12px"></div>
<svg class="a" style="left:1174px;top:634px" width="4" height="7"><path d="M0 0L4 3.5L0 7z" fill="#000"/></svg>
<div class="win" style="left:26px;top:377px;width:260px;height:278px"><div class="tb"></div>
<div class="a" style="left:6.8px;top:5.5px"><svg width="12" height="12" viewBox="0 0 12 12"><circle cx="6" cy="6" r="5.5" fill="#fff" opacity="0.5"/><circle cx="6" cy="6" r="5" fill="#111"/><path d="M3.2 1.8Q1.4 6 3.2 10.2M5.9 1Q4.1 6 5.9 11M8.6 1.5Q6.8 6 8.6 10.5M10.8 2.8Q9.6 6 10.8 9.2" stroke="#d8d000" stroke-width="1" fill="none"/></svg></div>
<div class="wt" style="left:22.7px;top:9px;color:#a3a9b1;transform:scaleX(0.932)">Synthetic Fringes - S00000_Flat.bmp</div>
<div class="wb" style="left:226px;top:6.5px"></div>
<svg class="a" style="left:233.5px;top:9.0px" width="10" height="9"><path d="M1.8 1.8L8.2 7.2M8.2 1.8L1.8 7.2" stroke="#5b6470" stroke-width="3" stroke-linecap="round"/><path d="M1.8 1.8L8.2 7.2M8.2 1.8L1.8 7.2" stroke="#fff" stroke-width="1.4" stroke-linecap="round"/></svg>
<div class="wb" style="left:199px;top:6.5px"></div>
<div class="a" style="left:207px;top:9.5px;width:9px;height:7px;border:1.5px solid #5b6470;border-radius:2px;background:#fff"></div><div class="a" style="left:209.5px;top:12.0px;width:4px;height:2px;background:#5b6470"></div>
<div class="wb" style="left:172px;top:6.5px"></div>
<div class="a" style="left:180px;top:12.5px;width:9px;height:4px;border:1.2px solid #5b6470;border-radius:2px;background:#fff"></div>
</div>
<svg class="a" style="left:32px;top:401px" width="235" height="234" viewBox="0 0 235 234"><defs><linearGradient id="sg" x1="0" y1="0" x2="0" y2="1"><stop offset="0" stop-color="#000"/><stop offset="0.16" stop-color="#280000"/><stop offset="0.33" stop-color="#d00000"/><stop offset="0.5" stop-color="#ff0a0a"/><stop offset="0.67" stop-color="#d00000"/><stop offset="0.84" stop-color="#280000"/><stop offset="1" stop-color="#000"/></linearGradient><clipPath id="sring"><path clip-rule="evenodd" d="M230.0 117.0L229.9 125.7L229.5 132.9L228.8 139.6L227.8 146.0L226.6 152.0L225.1 157.9L223.4 163.5L221.3 168.9L219.1 174.1L216.5 179.1L213.8 183.9L210.7 188.5L207.5 192.9L203.9 197.0L200.2 201.0L196.2 204.7L192.0 208.2L187.6 211.4L183.0 214.4L178.2 217.2L173.1 219.7L167.9 221.9L162.4 223.9L156.7 225.7L150.8 227.1L144.7 228.3L138.3 229.3L131.6 230.0L124.3 230.4L115.5 230.5L106.7 230.4L99.4 230.0L92.7 229.3L86.3 228.3L80.2 227.1L74.3 225.7L68.6 223.9L63.1 221.9L57.9 219.7L52.8 217.2L48.0 214.4L43.4 211.4L39.0 208.2L34.8 204.7L30.8 201.0L27.1 197.0L23.5 192.9L20.3 188.5L17.2 183.9L14.5 179.1L11.9 174.1L9.7 168.9L7.6 163.5L5.9 157.9L4.4 152.0L3.2 146.0L2.2 139.6L1.5 132.9L1.1 125.7L1.0 117.0L1.1 108.3L1.5 101.1L2.2 94.4L3.2 88.0L4.4 82.0L5.9 76.1L7.6 70.5L9.7 65.1L11.9 59.9L14.5 54.9L17.2 50.1L20.3 45.5L23.5 41.1L27.1 37.0L30.8 33.0L34.8 29.3L39.0 25.8L43.4 22.6L48.0 19.6L52.8 16.8L57.9 14.3L63.1 12.1L68.6 10.1L74.3 8.3L80.2 6.9L86.3 5.7L92.7 4.7L99.4 4.0L106.7 3.6L115.5 3.5L124.3 3.6L131.6 4.0L138.3 4.7L144.7 5.7L150.8 6.9L156.7 8.3L162.4 10.1L167.9 12.1L173.1 14.3L178.2 16.8L183.0 19.6L187.6 22.6L192.0 25.8L196.2 29.3L200.2 33.0L203.9 37.0L207.5 41.1L210.7 45.5L213.8 50.1L216.5 54.9L219.1 59.9L221.3 65.1L223.4 70.5L225.1 76.1L226.6 82.0L227.8 88.0L228.8 94.4L229.5 101.1L229.9 108.3Z M74.5 117a41.5 41.5 0 1 0 83.0 0a41.5 41.5 0 1 0 -83.0 0z"/></clipPath></defs><rect width="235" height="234" fill="#000"/><g clip-path="url(#sring)"><rect x="0" y="-8.97" width="235" height="11.45" fill="url(#sg)"/><rect x="0" y="2.47" width="235" height="11.45" fill="url(#sg)"/><rect x="0" y="13.92" width="235" height="11.45" fill="url(#sg)"/><rect x="0" y="25.38" width="235" height="11.45" fill="url(#sg)"/><rect x="0" y="36.82" width="235" height="11.45" fill="url(#sg)"/><rect x="0" y="48.27" width="235" height="11.45" fill="url(#sg)"/><rect x="0" y="59.73" width="235" height="11.45" fill="url(#sg)"/><rect x="0" y="71.17" width="235" height="11.45" fill="url(#sg)"/><rect x="0" y="82.62" width="235" height="11.45" fill="url(#sg)"/><rect x="0" y="94.08" width="235" height="11.45" fill="url(#sg)"/><rect x="0" y="105.53" width="235" height="11.45" fill="url(#sg)"/><rect x="0" y="116.98" width="235" height="11.45" fill="url(#sg)"/><rect x="0" y="128.42" width="235" height="11.45" fill="url(#sg)"/><rect x="0" y="139.87" width="235" height="11.45" fill="url(#sg)"/><rect x="0" y="151.32" width="235" height="11.45" fill="url(#sg)"/><rect x="0" y="162.77" width="235" height="11.45" fill="url(#sg)"/><rect x="0" y="174.22" width="235" height="11.45" fill="url(#sg)"/><rect x="0" y="185.67" width="235" height="11.45" fill="url(#sg)"/><rect x="0" y="197.12" width="235" height="11.45" fill="url(#sg)"/><rect x="0" y="208.57" width="235" height="11.45" fill="url(#sg)"/><rect x="0" y="220.02" width="235" height="11.45" fill="url(#sg)"/><rect x="0" y="231.47" width="235" height="11.45" fill="url(#sg)"/><rect x="0" y="242.92" width="235" height="11.45" fill="url(#sg)"/></g></svg>
<div class="sb" style="left:267px;top:401px;width:12px;height:234px;background:#f7f7f7"></div>
<div class="sbb" style="left:267px;top:401px;width:12px;height:13px"></div>
<svg class="a" style="left:270px;top:405px" width="7" height="4"><path d="M0 4L3.5 0L7 4z" fill="#a0a0a0"/></svg>
<div class="sbb" style="left:267px;top:622px;width:12px;height:13px"></div>
<svg class="a" style="left:270px;top:627px" width="7" height="4"><path d="M0 0L3.5 4L7 0z" fill="#a0a0a0"/></svg>
<div class="sb" style="left:32px;top:635px;width:247px;height:13px;background:#f7f7f7"></div>
<div class="sbb" style="left:32px;top:635px;width:13px;height:13px"></div>
<svg class="a" style="left:36px;top:638px" width="4" height="7"><path d="M4 0L0 3.5L4 7z" fill="#a0a0a0"/></svg>
<div class="sbb" style="left:254px;top:635px;width:13px;height:13px"></div>
<svg class="a" style="left:259px;top:638px" width="4" height="7"><path d="M0 0L4 3.5L0 7z" fill="#a0a0a0"/></svg>
<svg class="a" style="left:269px;top:637px" width="9" height="9"><path d="M8 1L1 8M8 4L4 8M8 7L7 8" stroke="#999"/></svg>
<div class="win" style="left:301px;top:419px;width:234px;height:233px"><div class="tb"></div>
<div class="a" style="left:6.8px;top:5px"><svg width="13" height="13" viewBox="0 0 13 13"><path d="M1 1v11h11" stroke="#222" fill="none" stroke-width="0.9"/><circle cx="7" cy="6" r="5" fill="#3a60ff"/><circle cx="7" cy="6" r="3.4" fill="#50e070"/><circle cx="7" cy="6" r="1.4" fill="#ffa030"/></svg></div>
<div class="wt" style="left:22.2px;top:9px;color:#a3a9b1;transform:scaleX(0.932)">Contour Plot - S00000_Flat....</div>
<div class="wb" style="left:201.5px;top:6px"></div>
<svg class="a" style="left:209.0px;top:8.5px" width="10" height="9"><path d="M1.8 1.8L8.2 7.2M8.2 1.8L1.8 7.2" stroke="#5b6470" stroke-width="3" stroke-linecap="round"/><path d="M1.8 1.8L8.2 7.2M8.2 1.8L1.8 7.2" stroke="#fff" stroke-width="1.4" stroke-linecap="round"/></svg>
<div class="wb" style="left:174.5px;top:6px"></div>
<div class="a" style="left:182.5px;top:9px;width:9px;height:7px;border:1.5px solid #5b6470;border-radius:2px;background:#fff"></div><div class="a" style="left:185.0px;top:11.5px;width:4px;height:2px;background:#5b6470"></div>
<div class="wb" style="left:147.5px;top:6px"></div>
<div class="a" style="left:155.5px;top:12px;width:9px;height:4px;border:1.2px solid #5b6470;border-radius:2px;background:#fff"></div>
</div>
<div class="cl" style="left:306px;top:441px;width:223px;height:205px"></div>
<svg class="a" style="left:306px;top:441px" width="223" height="205" viewBox="306 441 223 205"><text x="417" y="452" font-size="10.5" text-anchor="middle" font-family="Liberation Sans" fill="#111">0,050 Waves / contour</text><rect x="343" y="460" width="167.5" height="167" fill="none" stroke="#222" stroke-width="1.3"/><path d="M343.0 627v5M343 460.0h-4M349.7 627v3.5M343 466.7h-3.5M356.4 627v3.5M343 473.4h-3.5M363.1 627v3.5M343 480.0h-3.5M369.8 627v3.5M343 486.7h-3.5M376.5 627v5M343 493.4h-4M383.2 627v3.5M343 500.1h-3.5M389.9 627v3.5M343 506.8h-3.5M396.6 627v3.5M343 513.4h-3.5M403.3 627v3.5M343 520.1h-3.5M410.0 627v5M343 526.8h-4M416.7 627v3.5M343 533.5h-3.5M423.4 627v3.5M343 540.2h-3.5M430.1 627v3.5M343 546.8h-3.5M436.8 627v3.5M343 553.5h-3.5M443.5 627v5M343 560.2h-4M450.2 627v3.5M343 566.9h-3.5M456.9 627v3.5M343 573.6h-3.5M463.6 627v3.5M343 580.2h-3.5M470.3 627v3.5M343 586.9h-3.5M477.0 627v5M343 593.6h-4M483.7 627v3.5M343 600.3h-3.5M490.4 627v3.5M343 607.0h-3.5M497.1 627v3.5M343 613.6h-3.5M503.8 627v3.5M343 620.3h-3.5M510.5 627v5M343 627.0h-4" stroke="#222" stroke-width="1"/><text x="343.0" y="642" font-size="8.5" text-anchor="middle" font-family="Liberation Sans" fill="#111">-1</text><text x="376.5" y="642" font-size="8.5" text-anchor="middle" font-family="Liberation Sans" fill="#111">-0.6</text><text x="410.0" y="642" font-size="8.5" text-anchor="middle" font-family="Liberation Sans" fill="#111">-0.2</text><text x="443.5" y="642" font-size="8.5" text-anchor="middle" font-family="Liberation Sans" fill="#111">0.2</text><text x="477.0" y="642" font-size="8.5" text-anchor="middle" font-family="Liberation Sans" fill="#111">0.6</text><text x="510.5" y="642" font-size="8.5" text-anchor="middle" font-family="Liberation Sans" fill="#111">1</text><text x="339" y="463.0" font-size="8.5" text-anchor="end" font-family="Liberation Sans" fill="#111">1</text><text x="339" y="496.4" font-size="8.5" text-anchor="end" font-family="Liberation Sans" fill="#111">0.6</text><text x="339" y="529.8" font-size="8.5" text-anchor="end" font-family="Liberation Sans" fill="#111">0.2</text><text x="339" y="563.2" font-size="8.5" text-anchor="end" font-family="Liberation Sans" fill="#111">-0.2</text><text x="339" y="596.6" font-size="8.5" text-anchor="end" font-family="Liberation Sans" fill="#111">-0.6</text><text x="339" y="630.0" font-size="8.5" text-anchor="end" font-family="Liberation Sans" fill="#111">-1</text><circle cx="426.9" cy="543.4" r="83.6" fill="none" stroke="#3c3ce6" stroke-width="1.2"/><circle cx="426" cy="543.6" r="29.4" fill="none" stroke="#3c3ce6" stroke-width="1.2"/><path d="M413.9,465.9 L402.2,468 M395.7,471.9 C394.6,472.3 391.7,472.7 389.3,474.4 C386.9,476.1 384.3,477.9 381.5,482.2 C378.7,486.5 373.7,495.6 372.4,500.4 C371.1,505.1 372.6,506.6 373.7,510.7 C374.8,514.8 377.2,520.5 378.9,525 C380.6,529.5 382.4,534.5 384.1,538 C385.8,541.5 388.0,545.3 389.3,545.7 C390.6,546.1 391.0,542.6 391.9,540.6 C392.8,538.6 394.0,535.1 394.4,534 M451.5,523.7 C452.1,523.1 454.5,522.6 455.4,519.8 C456.3,517.0 456.6,511.2 456.7,506.9 C456.8,502.6 455.5,496.7 456.2,493.9 C456.9,491.1 457.5,491.2 460.6,490 C463.7,488.8 471.6,486.8 474.8,486.6 C478.0,486.4 478.7,487.5 480,488.7 C481.3,489.9 481.3,492.8 482.6,493.9 C483.9,495.0 486.9,495.0 487.8,495.2 M491.7,499.1 C492.4,500.2 494.5,503.9 495.6,505.6 C496.7,507.3 497.8,508.8 498.2,509.4 M394.4,554.8 C393.8,555.4 391.0,556.3 390.6,558.7 C390.2,561.1 390.6,564.8 391.9,569.1 C393.2,573.4 395.9,579.9 398.3,584.6 C400.7,589.4 404.7,594.2 406.1,597.6 C407.5,601.0 409.3,604.0 406.9,604.9 C404.5,605.8 397.0,604.0 391.9,602.8 C386.8,601.6 380.6,599.1 376.3,597.6 C372.0,596.1 367.6,594.4 365.9,593.7 M459.3,546.3 C460.2,546.4 463.0,545.8 464.5,547 C466.0,548.2 467.4,550.2 468.3,553.5 C469.2,556.8 469.6,562.2 469.6,566.5 C469.6,570.8 469.6,575.2 468.3,579.5 C467.0,583.8 464.3,588.5 461.9,592.4 C459.5,596.3 455.0,600.0 454.1,602.8 C453.2,605.6 455.0,608.2 456.7,609.3 C458.4,610.4 461.5,609.7 464.5,609.3 C467.5,608.9 470.9,608.9 474.8,606.7 C478.7,604.5 485.6,598.0 487.8,596.3" stroke="#3aa4f4" stroke-width="1.1" fill="none"/><path d="M415.2,571.7 C414.8,573.4 411.7,578.5 412.6,582 C413.5,585.5 417.2,590.2 420.4,592.4 C423.6,594.6 427.7,595.4 432,595 C436.3,594.6 442.6,592.4 446.3,589.8 C450.0,587.2 453.0,582.7 454.1,579.5 C455.2,576.3 453.9,572.4 452.8,570.4 C451.7,568.4 448.5,568.2 447.6,567.8 M410,569 L414,573 M400.9,619.6 L408.7,621.5" stroke="#3c3ce6" stroke-width="1.1" fill="none"/></svg>
<div class="a" style="left:454px;top:59px;width:183px;height:227px;box-shadow:0 3px 9px rgba(0,0,0,0.32)"></div>
<div class="a" style="left:454px;top:59px;width:183px;height:227px;background:#f0f0f0;border:1px solid #b4b4b4"></div>
<div class="a" style="left:455px;top:60px;width:181px;height:20px;background:#fff"></div>
<svg class="a" style="left:458px;top:63px" width="12" height="11" viewBox="0 0 12 11"><rect x="0.5" y="0.5" width="11" height="10" rx="1" fill="#4a4a10" stroke="#222" stroke-width="0.6"/><path d="M2 4h8M2 7h8" stroke="#d0d080" stroke-width="1" stroke-dasharray="1 1"/></svg>
<div class="t" style="left:473px;top:65px;font-size:9.6px;color:#111">Analyze</div>
<svg class="a" style="left:620px;top:65px" width="9" height="9"><path d="M0.5 0.5L8.5 8.5M8.5 0.5L0.5 8.5" stroke="#222" stroke-width="1"/></svg>
<div class="grp" style="left:458px;top:84px;width:100px;height:54px"><div class="gl" style="left:5px">Remove</div></div>
<div class="chk" style="left:464px;top:93px"></div>
<svg class="a" style="left:465px;top:94px" width="8" height="8"><path d="M1 3.5L3 5.8L7 1.3" stroke="#000" stroke-width="1.6" fill="none"/></svg>
<div class="lab" style="left:479px;top:94.2px;font-size:8.6px;color:#000;letter-spacing:-0.22px">Tilt</div>
<div class="chk" style="left:518px;top:93px"></div>
<svg class="a" style="left:519px;top:94px" width="8" height="8"><path d="M1 3.5L3 5.8L7 1.3" stroke="#000" stroke-width="1.6" fill="none"/></svg>
<div class="lab" style="left:531px;top:94.2px;font-size:8.6px;color:#000;letter-spacing:-0.22px">Coma</div>
<div class="chk" style="left:464px;top:108px"></div>
<svg class="a" style="left:465px;top:109px" width="8" height="8"><path d="M1 3.5L3 5.8L7 1.3" stroke="#000" stroke-width="1.6" fill="none"/></svg>
<div class="lab" style="left:479px;top:109.2px;font-size:8.6px;color:#000;letter-spacing:-0.22px">Defocus</div>
<div class="chk" style="left:518px;top:108px"></div>
<div class="lab" style="left:531px;top:109.2px;font-size:8.6px;color:#000;letter-spacing:-0.22px">S. A.</div>
<div class="chk" style="left:464px;top:124px"></div>
<div class="lab" style="left:478px;top:125.2px;font-size:8.6px;color:#000;letter-spacing:-0.22px">Astigmatism</div>
<div class="grp" style="left:561px;top:84px;width:72px;height:54px"><div class="gl" style="left:5px">Display Units</div></div>
<svg class="a" style="left:568px;top:93px" width="10" height="10"><circle cx="5" cy="5" r="4.5" fill="#fff"/><path d="M1.8 8.2A4.5 4.5 0 0 1 8.2 1.8" stroke="#9a9a9a" stroke-width="1" fill="none"/><path d="M2.7 7.3A3.3 3.3 0 0 1 7.3 2.7" stroke="#6a6a6a" stroke-width="0.7" fill="none"/><circle cx="5" cy="5" r="1.5" fill="#000"/></svg>
<div class="lab" style="left:581px;top:94.2px;font-size:8.6px;color:#000;letter-spacing:-0.22px">Waves</div>
<svg class="a" style="left:568px;top:108px" width="10" height="10"><circle cx="5" cy="5" r="4.5" fill="#fff"/><path d="M1.8 8.2A4.5 4.5 0 0 1 8.2 1.8" stroke="#9a9a9a" stroke-width="1" fill="none"/><path d="M2.7 7.3A3.3 3.3 0 0 1 7.3 2.7" stroke="#6a6a6a" stroke-width="0.7" fill="none"/></svg>
<div class="lab" style="left:581px;top:109.2px;font-size:8.6px;color:#000;letter-spacing:-0.22px">Micrometers</div>
<svg class="a" style="left:568px;top:124px" width="10" height="10"><circle cx="5" cy="5" r="4.5" fill="#fff"/><path d="M1.8 8.2A4.5 4.5 0 0 1 8.2 1.8" stroke="#9a9a9a" stroke-width="1" fill="none"/><path d="M2.7 7.3A3.3 3.3 0 0 1 7.3 2.7" stroke="#6a6a6a" stroke-width="0.7" fill="none"/></svg>
<div class="lab" style="left:581px;top:125.2px;font-size:8.6px;color:#000;letter-spacing:-0.22px">Microinches</div>
<div class="grp" style="left:458px;top:148px;width:100px;height:55px"><div class="gl" style="left:5px">Scale Factor</div></div>
<svg class="a" style="left:465px;top:155px" width="10" height="10"><circle cx="5" cy="5" r="4.5" fill="#fff"/><path d="M1.8 8.2A4.5 4.5 0 0 1 8.2 1.8" stroke="#9a9a9a" stroke-width="1" fill="none"/><path d="M2.7 7.3A3.3 3.3 0 0 1 7.3 2.7" stroke="#6a6a6a" stroke-width="0.7" fill="none"/><circle cx="5" cy="5" r="1.5" fill="#000"/></svg>
<div class="lab" style="left:478px;top:156.2px;font-size:8.6px;color:#000;letter-spacing:-0.22px">0.5</div>
<svg class="a" style="left:506px;top:155px" width="10" height="10"><circle cx="5" cy="5" r="4.5" fill="#fff"/><path d="M1.8 8.2A4.5 4.5 0 0 1 8.2 1.8" stroke="#9a9a9a" stroke-width="1" fill="none"/><path d="M2.7 7.3A3.3 3.3 0 0 1 7.3 2.7" stroke="#6a6a6a" stroke-width="0.7" fill="none"/></svg>
<div class="lab" style="left:519px;top:156.2px;font-size:8.6px;color:#000;letter-spacing:-0.22px">Custom</div>
<svg class="a" style="left:465px;top:171px" width="10" height="10"><circle cx="5" cy="5" r="4.5" fill="#fff"/><path d="M1.8 8.2A4.5 4.5 0 0 1 8.2 1.8" stroke="#9a9a9a" stroke-width="1" fill="none"/><path d="M2.7 7.3A3.3 3.3 0 0 1 7.3 2.7" stroke="#6a6a6a" stroke-width="0.7" fill="none"/></svg>
<div class="lab" style="left:478px;top:172.2px;font-size:8.6px;color:#000;letter-spacing:-0.22px">1.0</div>
<div class="edit" style="left:505px;top:170px;width:42px;height:14px;background:#f4f4f4"></div>
<div class="lab" style="left:508px;top:173.2px;font-size:8.6px;color:#999;letter-spacing:-0.22px">2</div>
<div class="chk" style="left:464px;top:190px"></div>
<div class="lab" style="left:478px;top:191.2px;font-size:8.6px;color:#000;letter-spacing:-0.22px">Invert Wavefront</div>
<div class="grp" style="left:561px;top:148px;width:72px;height:55px"><div class="gl" style="left:5px">Wavelength</div></div>
<div class="lab" style="left:567px;top:162.2px;font-size:8.6px;color:#000;letter-spacing:-0.22px">Input</div>
<div class="edit" style="left:598px;top:157px;width:31px;height:15px"></div>
<div class="lab" style="left:601px;top:161.2px;font-size:8.6px;color:#000;letter-spacing:-0.22px">532</div>
<div class="lab" style="left:567px;top:186.2px;font-size:8.6px;color:#000;letter-spacing:-0.22px">Output</div>
<div class="edit" style="left:598px;top:181px;width:31px;height:15px"></div>
<div class="lab" style="left:601px;top:185.2px;font-size:8.6px;color:#000;letter-spacing:-0.22px">532</div>
<div class="lab" style="left:461px;top:214.2px;font-size:8.6px;color:#000;letter-spacing:-0.22px">Limit Order</div>
<div class="edit" style="left:508px;top:211px;width:48px;height:16px"></div>
<div class="lab" style="left:511px;top:214.5px;font-size:8.6px;color:#000;letter-spacing:-0.22px">Auto</div>
<div class="sbb" style="left:542px;top:213px;width:12px;height:12px"></div>
<svg class="a" style="left:545px;top:217.5px" width="7" height="4"><path d="M0 0h7L3.5 4z" fill="#000"/></svg>
<div class="chk" style="left:568px;top:212px"></div>
<svg class="a" style="left:569px;top:213px" width="8" height="8"><path d="M1 3.5L3 5.8L7 1.3" stroke="#000" stroke-width="1.6" fill="none"/></svg>
<div class="lab" style="left:582px;top:213.2px;font-size:8.6px;color:#000;letter-spacing:-0.22px">Trim Edges</div>
<div class="grp" style="left:458px;top:235px;width:100px;height:48px"><div class="gl" style="left:5px">Subtract Reference</div></div>
<div class="edit" style="left:464px;top:245px;width:90px;height:16px"></div>
<div class="lab" style="left:467px;top:248.5px;font-size:8.6px;color:#000;letter-spacing:-0.22px">none</div>
<div class="sbb" style="left:540px;top:247px;width:12px;height:12px"></div>
<svg class="a" style="left:543px;top:251.5px" width="7" height="4"><path d="M0 0h7L3.5 4z" fill="#000"/></svg>
<div class="btn" style="left:467px;top:263px;width:86px;height:15px;padding-top:2.7px;font-size:8.6px">Browse Files...</div>
<div class="btn" style="left:570px;top:235px;width:58px;height:18px;padding-top:4.2px;font-size:8.6px">Close</div>
<div class="a" style="left:570px;top:260px;width:58px;height:19px;border:1px solid #1a1a1a"></div>
<div class="btn" style="left:571px;top:261px;width:56px;height:17px;padding-top:3.7px;font-size:8.6px">Apply</div>
<div class="a" style="left:574px;top:263px;width:50px;height:13px;border:1px dotted #555"></div>
<div class="a" style="left:549px;top:290px;width:75px;height:271px;background:#f0f0f0;border:1px solid #a8a8a8;box-shadow:0 3px 9px rgba(0,0,0,0.32)"></div>
<div class="a" style="left:550px;top:291px;width:73px;height:20px;background:#fafafa"></div>
<svg class="a" style="left:551px;top:294px" width="13" height="13" viewBox="0 0 13 13"><path d="M2 12L11 3" stroke="#111" stroke-width="1.8"/><path d="M6 1.5l6 4 1-2-4-3z" fill="#77771a" stroke="#111" stroke-width="0.8"/><path d="M2.5 1.5a2.2 2.2 0 1 0 3 3L11.5 11.5" stroke="#111" stroke-width="1.5" fill="none"/></svg>
<div class="t" style="left:568px;top:297px;font-size:9.3px;color:#a8a8a8">ToolB...</div>
<svg class="a" style="left:607px;top:296px" width="10" height="10"><path d="M0.5 0.5L9.5 9.5M9.5 0.5L0.5 9.5" stroke="#a0a0a0" stroke-width="1"/></svg>
<div class="grp" style="left:552px;top:316px;width:69px;height:64px"><div class="gl" style="left:2.5px">Aperture</div></div>
<div class="edit" style="left:553px;top:323px;width:65px;height:16px"></div>
<div class="lab" style="left:556px;top:326.5px;font-size:8.6px;color:#000;letter-spacing:-0.22px">Circle</div>
<div class="sbb" style="left:604px;top:325px;width:12px;height:12px"></div>
<svg class="a" style="left:607px;top:329.5px" width="7" height="4"><path d="M0 0h7L3.5 4z" fill="#000"/></svg>
<div class="btn" style="left:553px;top:342px;width:31px;height:16px;padding-top:3.2px;font-size:8.6px">Add</div>
<div class="btn" style="left:587px;top:342px;width:32px;height:16px;padding-top:3.2px;font-size:8.6px">Clear</div>
<div class="btn" style="left:553px;top:360px;width:31px;height:17px;padding-top:3.7px;font-size:8.6px">Load</div>
<div class="btn" style="left:587px;top:360px;width:32px;height:17px;padding-top:3.7px;font-size:8.6px">Save</div>
<div class="grp" style="left:552px;top:387px;width:69px;height:65px"><div class="gl" style="left:2.5px">Obstruction</div></div>
<div class="edit" style="left:553px;top:395px;width:65px;height:16px"></div>
<div class="lab" style="left:556px;top:398.5px;font-size:8.6px;color:#000;letter-spacing:-0.22px">Circle</div>
<div class="sbb" style="left:604px;top:397px;width:12px;height:12px"></div>
<svg class="a" style="left:607px;top:401.5px" width="7" height="4"><path d="M0 0h7L3.5 4z" fill="#000"/></svg>
<div class="btn" style="left:553px;top:413px;width:31px;height:16px;padding-top:3.2px;font-size:8.6px">Add</div>
<div class="btn" style="left:587px;top:413px;width:32px;height:16px;padding-top:3.2px;font-size:8.6px">Clear</div>
<div class="btn" style="left:553px;top:431px;width:31px;height:17px;padding-top:3.7px;font-size:8.6px">Load</div>
<div class="btn" style="left:587px;top:431px;width:32px;height:17px;padding-top:3.7px;font-size:8.6px">Save</div>
<div class="grp" style="left:552px;top:460px;width:69px;height:97px"><div class="gl" style="left:2.5px">Fringes</div></div>
<div class="lab" style="left:559px;top:474.2px;font-size:8.6px;color:#000;letter-spacing:-0.22px">Order</div>
<div class="edit" style="left:583px;top:470px;width:37px;height:15px"></div>
<div class="lab" style="left:586px;top:474.2px;font-size:8.6px;color:#000;letter-spacing:-0.22px">20</div>
<div class="sbb" style="left:606px;top:471px;width:13px;height:7px"></div><div class="sbb" style="left:606px;top:478px;width:13px;height:7px"></div>
<svg class="a" style="left:610px;top:473px" width="5" height="10"><path d="M0 3L2.5 0L5 3zM0 7L2.5 10L5 7z" fill="#000"/></svg>
<div class="btn" style="left:556px;top:492px;width:60px;height:17px;padding-top:3.7px;font-size:8.6px">Insert Order</div>
<div class="btn" style="left:556px;top:514px;width:60px;height:17px;padding-top:3.7px;font-size:8.6px">Delete Order</div>
<div class="btn" style="left:556px;top:536px;width:60px;height:17px;padding-top:3.7px;font-size:8.6px">Renumber</div>
</body></html>
